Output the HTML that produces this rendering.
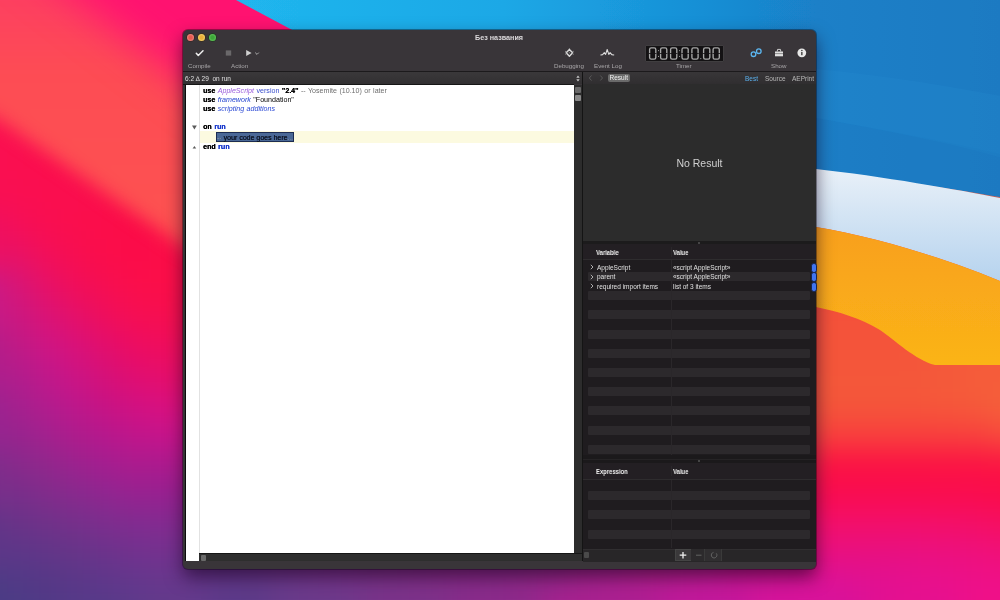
<!DOCTYPE html>
<html><head><meta charset="utf-8">
<style>
*{margin:0;padding:0;box-sizing:border-box}
html,body{width:1000px;height:600px;overflow:hidden;background:#e0206a;font-family:"Liberation Sans",sans-serif}
#bg{position:absolute;left:0;top:0;width:1000px;height:600px}
.abs{position:absolute}
.abs,.lbl,.row,.hdr{will-change:transform}
#win{position:absolute;left:183px;top:30px;width:633px;height:539px;background:#393539;border-radius:5px;overflow:hidden;box-shadow:0 8px 18px rgba(20,0,30,.6),0 0 0 1px rgba(0,0,0,.35)}
.code{font-size:7.1px;line-height:9px;color:#000;white-space:nowrap;word-spacing:0.5px}
.code b{font-weight:bold;text-shadow:0.25px 0 0 currentColor}
.hdr{font-size:7px;font-weight:bold;color:#f0f0f0;white-space:nowrap;transform:scaleX(0.84);transform-origin:0 0}
.row{position:absolute;font-size:6.5px;color:#e0e0e0;white-space:nowrap}
.stripe{left:588px;width:222px;height:9.4px;background:#2c292c;border-radius:1px}
.lbl{position:absolute;font-size:6.2px;color:#a8a6a8;white-space:nowrap}
</style></head><body>
<svg id="bg" viewBox="0 0 1000 600">
<defs>
<linearGradient id="gL" gradientUnits="userSpaceOnUse" x1="180" y1="0" x2="-166" y2="480">
<stop offset="0" stop-color="#ff1270"/>
<stop offset="0.177" stop-color="#fe3a62"/>
<stop offset="0.262" stop-color="#fd4d55"/>
<stop offset="0.32" stop-color="#fc4a55"/>
<stop offset="0.38" stop-color="#fb1e4c"/>
<stop offset="0.414" stop-color="#fd0c48"/>
<stop offset="0.515" stop-color="#e80c70"/>
<stop offset="0.6" stop-color="#cc1288"/>
<stop offset="0.667" stop-color="#b01888"/>
<stop offset="0.828" stop-color="#6a3488"/>
<stop offset="1" stop-color="#4a3c80"/>
</linearGradient>
<linearGradient id="gRight" x1="0" y1="0" x2="0" y2="600" gradientUnits="userSpaceOnUse">
<stop offset="0" stop-color="#f45438"/>
<stop offset="0.6" stop-color="#f45438"/>
<stop offset="0.68" stop-color="#f83a3c"/>
<stop offset="0.77" stop-color="#fb0c44"/>
<stop offset="0.87" stop-color="#f0107a"/>
<stop offset="1" stop-color="#d41892"/>
</linearGradient>
<linearGradient id="gBot" x1="183" y1="0" x2="1000" y2="0" gradientUnits="userSpaceOnUse">
<stop offset="0" stop-color="#4e3a86"/>
<stop offset="0.15" stop-color="#6a3a8a"/>
<stop offset="0.39" stop-color="#8a2a8a"/>
<stop offset="0.57" stop-color="#a02890"/>
<stop offset="0.68" stop-color="#c0189a"/>
<stop offset="0.78" stop-color="#e0108a"/>
<stop offset="1" stop-color="#f01070"/>
</linearGradient>
<linearGradient id="gMaskL" x1="0" y1="0" x2="1000" y2="0" gradientUnits="userSpaceOnUse">
<stop offset="0.45" stop-color="#fff"/>
<stop offset="0.75" stop-color="#000"/>
</linearGradient>
<linearGradient id="gMaskB" x1="0" y1="520" x2="0" y2="600" gradientUnits="userSpaceOnUse">
<stop offset="0.3" stop-color="#000"/>
<stop offset="0.65" stop-color="#fff"/>
</linearGradient>
<linearGradient id="gMaskBx" x1="0" y1="0" x2="1000" y2="0" gradientUnits="userSpaceOnUse">
<stop offset="0.12" stop-color="#000"/>
<stop offset="0.2" stop-color="#fff"/>
<stop offset="0.8" stop-color="#fff"/>
<stop offset="0.84" stop-color="#000"/>
</linearGradient>
<mask id="mBx"><rect width="1000" height="600" fill="url(#gMaskBx)"/></mask>
<mask id="mB"><rect width="1000" height="600" fill="url(#gMaskB)" mask="url(#mBx)"/></mask>
<mask id="mL"><rect width="1000" height="600" fill="url(#gMaskL)"/></mask>
<filter id="b8" x="-20%" y="-20%" width="140%" height="140%"><feGaussianBlur stdDeviation="8"/></filter>
<filter id="bgrid" x="-10%" y="-10%" width="120%" height="120%" color-interpolation-filters="sRGB"><feGaussianBlur stdDeviation="14"/></filter>
<filter id="bsoft" x="-20%" y="-20%" width="140%" height="140%" color-interpolation-filters="sRGB"><feGaussianBlur stdDeviation="9"/></filter>
<filter id="bpink" x="-30%" y="-30%" width="160%" height="160%" color-interpolation-filters="sRGB"><feGaussianBlur stdDeviation="20"/></filter>
<linearGradient id="gCoral" x1="0" y1="0" x2="0" y2="240" gradientUnits="userSpaceOnUse"><stop offset="0" stop-color="#fd4060"/><stop offset="0.3" stop-color="#fd4c54"/><stop offset="1" stop-color="#fd5250"/></linearGradient>
<filter id="b1"><feGaussianBlur stdDeviation="0.7"/></filter>
<linearGradient id="gBlue" x1="236" y1="0" x2="1000" y2="0" gradientUnits="userSpaceOnUse">
<stop offset="0" stop-color="#20b6ee"/>
<stop offset="0.35" stop-color="#1ca8e6"/>
<stop offset="0.6" stop-color="#1890d6"/>
<stop offset="0.76" stop-color="#1a80c8"/>
<stop offset="1" stop-color="#1a7ac2"/>
</linearGradient>
<linearGradient id="gWhite" x1="0" y1="170" x2="0" y2="285" gradientUnits="userSpaceOnUse">
<stop offset="0" stop-color="#e8f0f8"/>
<stop offset="1" stop-color="#b4d2ee"/>
</linearGradient>
<linearGradient id="gOr" x1="0" y1="230" x2="0" y2="365" gradientUnits="userSpaceOnUse">
<stop offset="0" stop-color="#f8a01c"/>
<stop offset="1" stop-color="#fbb418"/>
</linearGradient>
</defs>
<g filter="url(#bgrid)"><rect x="-60" y="-60" width="30.5" height="30.5" fill="#fb1050"/><rect x="-30" y="-60" width="30.5" height="30.5" fill="#fb1050"/><rect x="0" y="-60" width="30.5" height="30.5" fill="#fb1050"/><rect x="30" y="-60" width="30.5" height="30.5" fill="#fb1050"/><rect x="60" y="-60" width="30.5" height="30.5" fill="#fb1050"/><rect x="90" y="-60" width="30.5" height="30.5" fill="#fb1050"/><rect x="120" y="-60" width="30.5" height="30.5" fill="#fb1050"/><rect x="150" y="-60" width="30.5" height="30.5" fill="#fb1050"/><rect x="180" y="-60" width="30.5" height="30.5" fill="#fb1050"/><rect x="210" y="-60" width="30.5" height="30.5" fill="#fb1050"/><rect x="240" y="-60" width="30.5" height="30.5" fill="#fb1050"/><rect x="270" y="-60" width="30.5" height="30.5" fill="#fb1050"/><rect x="300" y="-60" width="30.5" height="30.5" fill="#fb1050"/><rect x="330" y="-60" width="30.5" height="30.5" fill="#fb1050"/><rect x="360" y="-60" width="30.5" height="30.5" fill="#fb1050"/><rect x="390" y="-60" width="30.5" height="30.5" fill="#fb1050"/><rect x="420" y="-60" width="30.5" height="30.5" fill="#fb1050"/><rect x="450" y="-60" width="30.5" height="30.5" fill="#fb1050"/><rect x="480" y="-60" width="30.5" height="30.5" fill="#fb1050"/><rect x="510" y="-60" width="30.5" height="30.5" fill="#fb1050"/><rect x="540" y="-60" width="30.5" height="30.5" fill="#fb1050"/><rect x="570" y="-60" width="30.5" height="30.5" fill="#fb1050"/><rect x="600" y="-60" width="30.5" height="30.5" fill="#fb1050"/><rect x="630" y="-60" width="30.5" height="30.5" fill="#fb1050"/><rect x="660" y="-60" width="30.5" height="30.5" fill="#f4503a"/><rect x="690" y="-60" width="30.5" height="30.5" fill="#f4503a"/><rect x="720" y="-60" width="30.5" height="30.5" fill="#f4503a"/><rect x="750" y="-60" width="30.5" height="30.5" fill="#f4503a"/><rect x="780" y="-60" width="30.5" height="30.5" fill="#f4503a"/><rect x="810" y="-60" width="30.5" height="30.5" fill="#f4503a"/><rect x="840" y="-60" width="30.5" height="30.5" fill="#f4503a"/><rect x="870" y="-60" width="30.5" height="30.5" fill="#f4503a"/><rect x="900" y="-60" width="30.5" height="30.5" fill="#f4503a"/><rect x="930" y="-60" width="30.5" height="30.5" fill="#f4503a"/><rect x="960" y="-60" width="30.5" height="30.5" fill="#f45a3a"/><rect x="990" y="-60" width="30.5" height="30.5" fill="#f45a3a"/><rect x="1020" y="-60" width="30.5" height="30.5" fill="#f45a3a"/><rect x="1050" y="-60" width="30.5" height="30.5" fill="#f45a3a"/><rect x="-60" y="-30" width="30.5" height="30.5" fill="#fb1050"/><rect x="-30" y="-30" width="30.5" height="30.5" fill="#fb1050"/><rect x="0" y="-30" width="30.5" height="30.5" fill="#fb1050"/><rect x="30" y="-30" width="30.5" height="30.5" fill="#fb1050"/><rect x="60" y="-30" width="30.5" height="30.5" fill="#fb1050"/><rect x="90" y="-30" width="30.5" height="30.5" fill="#fb1050"/><rect x="120" y="-30" width="30.5" height="30.5" fill="#fb1050"/><rect x="150" y="-30" width="30.5" height="30.5" fill="#fb1050"/><rect x="180" y="-30" width="30.5" height="30.5" fill="#fb1050"/><rect x="210" y="-30" width="30.5" height="30.5" fill="#fb1050"/><rect x="240" y="-30" width="30.5" height="30.5" fill="#fb1050"/><rect x="270" y="-30" width="30.5" height="30.5" fill="#fb1050"/><rect x="300" y="-30" width="30.5" height="30.5" fill="#fb1050"/><rect x="330" y="-30" width="30.5" height="30.5" fill="#fb1050"/><rect x="360" y="-30" width="30.5" height="30.5" fill="#fb1050"/><rect x="390" y="-30" width="30.5" height="30.5" fill="#fb1050"/><rect x="420" y="-30" width="30.5" height="30.5" fill="#fb1050"/><rect x="450" y="-30" width="30.5" height="30.5" fill="#fb1050"/><rect x="480" y="-30" width="30.5" height="30.5" fill="#fb1050"/><rect x="510" y="-30" width="30.5" height="30.5" fill="#fb1050"/><rect x="540" y="-30" width="30.5" height="30.5" fill="#fb1050"/><rect x="570" y="-30" width="30.5" height="30.5" fill="#fb1050"/><rect x="600" y="-30" width="30.5" height="30.5" fill="#fb1050"/><rect x="630" y="-30" width="30.5" height="30.5" fill="#fb1050"/><rect x="660" y="-30" width="30.5" height="30.5" fill="#f4503a"/><rect x="690" y="-30" width="30.5" height="30.5" fill="#f4503a"/><rect x="720" y="-30" width="30.5" height="30.5" fill="#f4503a"/><rect x="750" y="-30" width="30.5" height="30.5" fill="#f4503a"/><rect x="780" y="-30" width="30.5" height="30.5" fill="#f4503a"/><rect x="810" y="-30" width="30.5" height="30.5" fill="#f4503a"/><rect x="840" y="-30" width="30.5" height="30.5" fill="#f4503a"/><rect x="870" y="-30" width="30.5" height="30.5" fill="#f4503a"/><rect x="900" y="-30" width="30.5" height="30.5" fill="#f4503a"/><rect x="930" y="-30" width="30.5" height="30.5" fill="#f4503a"/><rect x="960" y="-30" width="30.5" height="30.5" fill="#f45a3a"/><rect x="990" y="-30" width="30.5" height="30.5" fill="#f45a3a"/><rect x="1020" y="-30" width="30.5" height="30.5" fill="#f45a3a"/><rect x="1050" y="-30" width="30.5" height="30.5" fill="#f45a3a"/><rect x="-60" y="0" width="30.5" height="30.5" fill="#fb1050"/><rect x="-30" y="0" width="30.5" height="30.5" fill="#fb1050"/><rect x="0" y="0" width="30.5" height="30.5" fill="#fb1050"/><rect x="30" y="0" width="30.5" height="30.5" fill="#fb1050"/><rect x="60" y="0" width="30.5" height="30.5" fill="#fb1050"/><rect x="90" y="0" width="30.5" height="30.5" fill="#fb1050"/><rect x="120" y="0" width="30.5" height="30.5" fill="#fb1050"/><rect x="150" y="0" width="30.5" height="30.5" fill="#fb1050"/><rect x="180" y="0" width="30.5" height="30.5" fill="#fb1050"/><rect x="210" y="0" width="30.5" height="30.5" fill="#fb1050"/><rect x="240" y="0" width="30.5" height="30.5" fill="#fb1050"/><rect x="270" y="0" width="30.5" height="30.5" fill="#fb1050"/><rect x="300" y="0" width="30.5" height="30.5" fill="#fb1050"/><rect x="330" y="0" width="30.5" height="30.5" fill="#fb1050"/><rect x="360" y="0" width="30.5" height="30.5" fill="#fb1050"/><rect x="390" y="0" width="30.5" height="30.5" fill="#fb1050"/><rect x="420" y="0" width="30.5" height="30.5" fill="#fb1050"/><rect x="450" y="0" width="30.5" height="30.5" fill="#fb1050"/><rect x="480" y="0" width="30.5" height="30.5" fill="#fb1050"/><rect x="510" y="0" width="30.5" height="30.5" fill="#fb1050"/><rect x="540" y="0" width="30.5" height="30.5" fill="#fb1050"/><rect x="570" y="0" width="30.5" height="30.5" fill="#fb1050"/><rect x="600" y="0" width="30.5" height="30.5" fill="#fb1050"/><rect x="630" y="0" width="30.5" height="30.5" fill="#f4503a"/><rect x="660" y="0" width="30.5" height="30.5" fill="#f4503a"/><rect x="690" y="0" width="30.5" height="30.5" fill="#f4503a"/><rect x="720" y="0" width="30.5" height="30.5" fill="#f4503a"/><rect x="750" y="0" width="30.5" height="30.5" fill="#f4503a"/><rect x="780" y="0" width="30.5" height="30.5" fill="#f4503a"/><rect x="810" y="0" width="30.5" height="30.5" fill="#f4503a"/><rect x="840" y="0" width="30.5" height="30.5" fill="#f4503a"/><rect x="870" y="0" width="30.5" height="30.5" fill="#f4503a"/><rect x="900" y="0" width="30.5" height="30.5" fill="#f4503a"/><rect x="930" y="0" width="30.5" height="30.5" fill="#f4503a"/><rect x="960" y="0" width="30.5" height="30.5" fill="#f45a3a"/><rect x="990" y="0" width="30.5" height="30.5" fill="#f45a3a"/><rect x="1020" y="0" width="30.5" height="30.5" fill="#f45a3a"/><rect x="1050" y="0" width="30.5" height="30.5" fill="#f45a3a"/><rect x="-60" y="30" width="30.5" height="30.5" fill="#fb1050"/><rect x="-30" y="30" width="30.5" height="30.5" fill="#fb1050"/><rect x="0" y="30" width="30.5" height="30.5" fill="#fb1050"/><rect x="30" y="30" width="30.5" height="30.5" fill="#fb1050"/><rect x="60" y="30" width="30.5" height="30.5" fill="#fb1050"/><rect x="90" y="30" width="30.5" height="30.5" fill="#fb1050"/><rect x="120" y="30" width="30.5" height="30.5" fill="#fb1050"/><rect x="150" y="30" width="30.5" height="30.5" fill="#fb1050"/><rect x="180" y="30" width="30.5" height="30.5" fill="#fb1050"/><rect x="210" y="30" width="30.5" height="30.5" fill="#fb1050"/><rect x="240" y="30" width="30.5" height="30.5" fill="#fb1050"/><rect x="270" y="30" width="30.5" height="30.5" fill="#fb1050"/><rect x="300" y="30" width="30.5" height="30.5" fill="#fa134f"/><rect x="330" y="30" width="30.5" height="30.5" fill="#fa194d"/><rect x="360" y="30" width="30.5" height="30.5" fill="#fb1050"/><rect x="390" y="30" width="30.5" height="30.5" fill="#fb1050"/><rect x="420" y="30" width="30.5" height="30.5" fill="#fb1050"/><rect x="450" y="30" width="30.5" height="30.5" fill="#fb1050"/><rect x="480" y="30" width="30.5" height="30.5" fill="#fb1050"/><rect x="510" y="30" width="30.5" height="30.5" fill="#fb1050"/><rect x="540" y="30" width="30.5" height="30.5" fill="#fb1050"/><rect x="570" y="30" width="30.5" height="30.5" fill="#fb1050"/><rect x="600" y="30" width="30.5" height="30.5" fill="#f4503a"/><rect x="630" y="30" width="30.5" height="30.5" fill="#f4503a"/><rect x="660" y="30" width="30.5" height="30.5" fill="#f4503a"/><rect x="690" y="30" width="30.5" height="30.5" fill="#f4503a"/><rect x="720" y="30" width="30.5" height="30.5" fill="#f4503a"/><rect x="750" y="30" width="30.5" height="30.5" fill="#f4503a"/><rect x="780" y="30" width="30.5" height="30.5" fill="#f4503a"/><rect x="810" y="30" width="30.5" height="30.5" fill="#f4503a"/><rect x="840" y="30" width="30.5" height="30.5" fill="#f4503a"/><rect x="870" y="30" width="30.5" height="30.5" fill="#f4503a"/><rect x="900" y="30" width="30.5" height="30.5" fill="#f4503a"/><rect x="930" y="30" width="30.5" height="30.5" fill="#f4503a"/><rect x="960" y="30" width="30.5" height="30.5" fill="#f45a3a"/><rect x="990" y="30" width="30.5" height="30.5" fill="#f45a3a"/><rect x="1020" y="30" width="30.5" height="30.5" fill="#f45a3a"/><rect x="1050" y="30" width="30.5" height="30.5" fill="#f45a3a"/><rect x="-60" y="60" width="30.5" height="30.5" fill="#fb1050"/><rect x="-30" y="60" width="30.5" height="30.5" fill="#fb1050"/><rect x="0" y="60" width="30.5" height="30.5" fill="#fb1050"/><rect x="30" y="60" width="30.5" height="30.5" fill="#fb1050"/><rect x="60" y="60" width="30.5" height="30.5" fill="#fb1050"/><rect x="90" y="60" width="30.5" height="30.5" fill="#fb1050"/><rect x="120" y="60" width="30.5" height="30.5" fill="#fb1050"/><rect x="150" y="60" width="30.5" height="30.5" fill="#fb1050"/><rect x="180" y="60" width="30.5" height="30.5" fill="#fb1050"/><rect x="210" y="60" width="30.5" height="30.5" fill="#fb1050"/><rect x="240" y="60" width="30.5" height="30.5" fill="#fb0f4e"/><rect x="270" y="60" width="30.5" height="30.5" fill="#f81151"/><rect x="300" y="60" width="30.5" height="30.5" fill="#f31354"/><rect x="330" y="60" width="30.5" height="30.5" fill="#f61750"/><rect x="360" y="60" width="30.5" height="30.5" fill="#fa1a4d"/><rect x="390" y="60" width="30.5" height="30.5" fill="#fa1c4c"/><rect x="420" y="60" width="30.5" height="30.5" fill="#fb1050"/><rect x="450" y="60" width="30.5" height="30.5" fill="#fb1050"/><rect x="480" y="60" width="30.5" height="30.5" fill="#fb1050"/><rect x="510" y="60" width="30.5" height="30.5" fill="#fb1050"/><rect x="540" y="60" width="30.5" height="30.5" fill="#fb1050"/><rect x="570" y="60" width="30.5" height="30.5" fill="#fb1050"/><rect x="600" y="60" width="30.5" height="30.5" fill="#f4503a"/><rect x="630" y="60" width="30.5" height="30.5" fill="#f4503a"/><rect x="660" y="60" width="30.5" height="30.5" fill="#f4503a"/><rect x="690" y="60" width="30.5" height="30.5" fill="#f4503a"/><rect x="720" y="60" width="30.5" height="30.5" fill="#f4503a"/><rect x="750" y="60" width="30.5" height="30.5" fill="#f4503a"/><rect x="780" y="60" width="30.5" height="30.5" fill="#f4503a"/><rect x="810" y="60" width="30.5" height="30.5" fill="#f4503a"/><rect x="840" y="60" width="30.5" height="30.5" fill="#f4503a"/><rect x="870" y="60" width="30.5" height="30.5" fill="#f4503a"/><rect x="900" y="60" width="30.5" height="30.5" fill="#f4503a"/><rect x="930" y="60" width="30.5" height="30.5" fill="#f4503a"/><rect x="960" y="60" width="30.5" height="30.5" fill="#f45a3a"/><rect x="990" y="60" width="30.5" height="30.5" fill="#f45a3a"/><rect x="1020" y="60" width="30.5" height="30.5" fill="#f45a3a"/><rect x="1050" y="60" width="30.5" height="30.5" fill="#f45a3a"/><rect x="-60" y="90" width="30.5" height="30.5" fill="#fb1050"/><rect x="-30" y="90" width="30.5" height="30.5" fill="#fb1050"/><rect x="0" y="90" width="30.5" height="30.5" fill="#fb1050"/><rect x="30" y="90" width="30.5" height="30.5" fill="#fb1050"/><rect x="60" y="90" width="30.5" height="30.5" fill="#fb1050"/><rect x="90" y="90" width="30.5" height="30.5" fill="#fb1050"/><rect x="120" y="90" width="30.5" height="30.5" fill="#fb1050"/><rect x="150" y="90" width="30.5" height="30.5" fill="#fb1050"/><rect x="180" y="90" width="30.5" height="30.5" fill="#fb1050"/><rect x="210" y="90" width="30.5" height="30.5" fill="#fb0f4e"/><rect x="240" y="90" width="30.5" height="30.5" fill="#fb0f4d"/><rect x="270" y="90" width="30.5" height="30.5" fill="#f41152"/><rect x="300" y="90" width="30.5" height="30.5" fill="#ed1357"/><rect x="330" y="90" width="30.5" height="30.5" fill="#ef1755"/><rect x="360" y="90" width="30.5" height="30.5" fill="#f21a51"/><rect x="390" y="90" width="30.5" height="30.5" fill="#f61e4e"/><rect x="420" y="90" width="30.5" height="30.5" fill="#f9224a"/><rect x="450" y="90" width="30.5" height="30.5" fill="#f9224a"/><rect x="480" y="90" width="30.5" height="30.5" fill="#f92749"/><rect x="510" y="90" width="30.5" height="30.5" fill="#fb1050"/><rect x="540" y="90" width="30.5" height="30.5" fill="#fb1050"/><rect x="570" y="90" width="30.5" height="30.5" fill="#f4503a"/><rect x="600" y="90" width="30.5" height="30.5" fill="#f4503a"/><rect x="630" y="90" width="30.5" height="30.5" fill="#f4503a"/><rect x="660" y="90" width="30.5" height="30.5" fill="#f4503a"/><rect x="690" y="90" width="30.5" height="30.5" fill="#f4503a"/><rect x="720" y="90" width="30.5" height="30.5" fill="#f4503a"/><rect x="750" y="90" width="30.5" height="30.5" fill="#f4503a"/><rect x="780" y="90" width="30.5" height="30.5" fill="#f4503a"/><rect x="810" y="90" width="30.5" height="30.5" fill="#f4503a"/><rect x="840" y="90" width="30.5" height="30.5" fill="#f4503a"/><rect x="870" y="90" width="30.5" height="30.5" fill="#f4503a"/><rect x="900" y="90" width="30.5" height="30.5" fill="#f4503a"/><rect x="930" y="90" width="30.5" height="30.5" fill="#f4503a"/><rect x="960" y="90" width="30.5" height="30.5" fill="#f45a3a"/><rect x="990" y="90" width="30.5" height="30.5" fill="#f45a3a"/><rect x="1020" y="90" width="30.5" height="30.5" fill="#f45a3a"/><rect x="1050" y="90" width="30.5" height="30.5" fill="#f45a3a"/><rect x="-60" y="120" width="30.5" height="30.5" fill="#fb1050"/><rect x="-30" y="120" width="30.5" height="30.5" fill="#fb1050"/><rect x="0" y="120" width="30.5" height="30.5" fill="#fb1050"/><rect x="30" y="120" width="30.5" height="30.5" fill="#fb1050"/><rect x="60" y="120" width="30.5" height="30.5" fill="#fb1050"/><rect x="90" y="120" width="30.5" height="30.5" fill="#fb104e"/><rect x="120" y="120" width="30.5" height="30.5" fill="#fb104e"/><rect x="150" y="120" width="30.5" height="30.5" fill="#fb104e"/><rect x="180" y="120" width="30.5" height="30.5" fill="#fb0f4d"/><rect x="210" y="120" width="30.5" height="30.5" fill="#fb0e4c"/><rect x="240" y="120" width="30.5" height="30.5" fill="#f9104e"/><rect x="270" y="120" width="30.5" height="30.5" fill="#f11253"/><rect x="300" y="120" width="30.5" height="30.5" fill="#e91458"/><rect x="330" y="120" width="30.5" height="30.5" fill="#e71759"/><rect x="360" y="120" width="30.5" height="30.5" fill="#eb1a56"/><rect x="390" y="120" width="30.5" height="30.5" fill="#ee1e52"/><rect x="420" y="120" width="30.5" height="30.5" fill="#f2224f"/><rect x="450" y="120" width="30.5" height="30.5" fill="#f5254b"/><rect x="480" y="120" width="30.5" height="30.5" fill="#f82947"/><rect x="510" y="120" width="30.5" height="30.5" fill="#f82947"/><rect x="540" y="120" width="30.5" height="30.5" fill="#f82c47"/><rect x="570" y="120" width="30.5" height="30.5" fill="#f4503a"/><rect x="600" y="120" width="30.5" height="30.5" fill="#f4503a"/><rect x="630" y="120" width="30.5" height="30.5" fill="#f4503a"/><rect x="660" y="120" width="30.5" height="30.5" fill="#f4503a"/><rect x="690" y="120" width="30.5" height="30.5" fill="#f4503a"/><rect x="720" y="120" width="30.5" height="30.5" fill="#f4503a"/><rect x="750" y="120" width="30.5" height="30.5" fill="#f4503a"/><rect x="780" y="120" width="30.5" height="30.5" fill="#f4503a"/><rect x="810" y="120" width="30.5" height="30.5" fill="#f4503a"/><rect x="840" y="120" width="30.5" height="30.5" fill="#f4503a"/><rect x="870" y="120" width="30.5" height="30.5" fill="#f4503a"/><rect x="900" y="120" width="30.5" height="30.5" fill="#f4503a"/><rect x="930" y="120" width="30.5" height="30.5" fill="#f4503a"/><rect x="960" y="120" width="30.5" height="30.5" fill="#f45a3a"/><rect x="990" y="120" width="30.5" height="30.5" fill="#f45a3a"/><rect x="1020" y="120" width="30.5" height="30.5" fill="#f45a3a"/><rect x="1050" y="120" width="30.5" height="30.5" fill="#f45a3a"/><rect x="-60" y="150" width="30.5" height="30.5" fill="#f91052"/><rect x="-30" y="150" width="30.5" height="30.5" fill="#f91052"/><rect x="0" y="150" width="30.5" height="30.5" fill="#fa0f50"/><rect x="30" y="150" width="30.5" height="30.5" fill="#fb0e4e"/><rect x="60" y="150" width="30.5" height="30.5" fill="#fb0e4e"/><rect x="90" y="150" width="30.5" height="30.5" fill="#fb0e4c"/><rect x="120" y="150" width="30.5" height="30.5" fill="#fb0e4c"/><rect x="150" y="150" width="30.5" height="30.5" fill="#fb0e4c"/><rect x="180" y="150" width="30.5" height="30.5" fill="#fb0e4b"/><rect x="210" y="150" width="30.5" height="30.5" fill="#fb0e4b"/><rect x="240" y="150" width="30.5" height="30.5" fill="#f6114f"/><rect x="270" y="150" width="30.5" height="30.5" fill="#ee1355"/><rect x="300" y="150" width="30.5" height="30.5" fill="#e6155a"/><rect x="330" y="150" width="30.5" height="30.5" fill="#e0175e"/><rect x="360" y="150" width="30.5" height="30.5" fill="#e31a5a"/><rect x="390" y="150" width="30.5" height="30.5" fill="#e71e57"/><rect x="420" y="150" width="30.5" height="30.5" fill="#ea2253"/><rect x="450" y="150" width="30.5" height="30.5" fill="#ee254f"/><rect x="480" y="150" width="30.5" height="30.5" fill="#f1294c"/><rect x="510" y="150" width="30.5" height="30.5" fill="#f42d48"/><rect x="540" y="150" width="30.5" height="30.5" fill="#f83045"/><rect x="570" y="150" width="30.5" height="30.5" fill="#f83045"/><rect x="600" y="150" width="30.5" height="30.5" fill="#f83245"/><rect x="630" y="150" width="30.5" height="30.5" fill="#f83545"/><rect x="660" y="150" width="30.5" height="30.5" fill="#f4503a"/><rect x="690" y="150" width="30.5" height="30.5" fill="#f4503a"/><rect x="720" y="150" width="30.5" height="30.5" fill="#f4503a"/><rect x="750" y="150" width="30.5" height="30.5" fill="#f4503a"/><rect x="780" y="150" width="30.5" height="30.5" fill="#f4503a"/><rect x="810" y="150" width="30.5" height="30.5" fill="#f4503a"/><rect x="840" y="150" width="30.5" height="30.5" fill="#f4503a"/><rect x="870" y="150" width="30.5" height="30.5" fill="#f4503a"/><rect x="900" y="150" width="30.5" height="30.5" fill="#f4503a"/><rect x="930" y="150" width="30.5" height="30.5" fill="#f4503a"/><rect x="960" y="150" width="30.5" height="30.5" fill="#f45a3a"/><rect x="990" y="150" width="30.5" height="30.5" fill="#f45a3a"/><rect x="1020" y="150" width="30.5" height="30.5" fill="#f45a3a"/><rect x="1050" y="150" width="30.5" height="30.5" fill="#f45a3a"/><rect x="-60" y="180" width="30.5" height="30.5" fill="#f91052"/><rect x="-30" y="180" width="30.5" height="30.5" fill="#f91052"/><rect x="0" y="180" width="30.5" height="30.5" fill="#f90f52"/><rect x="30" y="180" width="30.5" height="30.5" fill="#fa0e4f"/><rect x="60" y="180" width="30.5" height="30.5" fill="#fa0e4e"/><rect x="90" y="180" width="30.5" height="30.5" fill="#fb0e4b"/><rect x="120" y="180" width="30.5" height="30.5" fill="#fb0e4a"/><rect x="150" y="180" width="30.5" height="30.5" fill="#fb0e4a"/><rect x="180" y="180" width="30.5" height="30.5" fill="#fb0d4a"/><rect x="210" y="180" width="30.5" height="30.5" fill="#fa104b"/><rect x="240" y="180" width="30.5" height="30.5" fill="#f31151"/><rect x="270" y="180" width="30.5" height="30.5" fill="#eb1356"/><rect x="300" y="180" width="30.5" height="30.5" fill="#e3155b"/><rect x="330" y="180" width="30.5" height="30.5" fill="#db1760"/><rect x="360" y="180" width="30.5" height="30.5" fill="#dc1a5f"/><rect x="390" y="180" width="30.5" height="30.5" fill="#df1e5b"/><rect x="420" y="180" width="30.5" height="30.5" fill="#e32257"/><rect x="450" y="180" width="30.5" height="30.5" fill="#e62554"/><rect x="480" y="180" width="30.5" height="30.5" fill="#ea2950"/><rect x="510" y="180" width="30.5" height="30.5" fill="#ed2d4d"/><rect x="540" y="180" width="30.5" height="30.5" fill="#f03049"/><rect x="570" y="180" width="30.5" height="30.5" fill="#f43446"/><rect x="600" y="180" width="30.5" height="30.5" fill="#f73743"/><rect x="630" y="180" width="30.5" height="30.5" fill="#f73743"/><rect x="660" y="180" width="30.5" height="30.5" fill="#f73843"/><rect x="690" y="180" width="30.5" height="30.5" fill="#f73b43"/><rect x="720" y="180" width="30.5" height="30.5" fill="#f4503a"/><rect x="750" y="180" width="30.5" height="30.5" fill="#f4503a"/><rect x="780" y="180" width="30.5" height="30.5" fill="#f4503a"/><rect x="810" y="180" width="30.5" height="30.5" fill="#f4503a"/><rect x="840" y="180" width="30.5" height="30.5" fill="#f4503a"/><rect x="870" y="180" width="30.5" height="30.5" fill="#f4503a"/><rect x="900" y="180" width="30.5" height="30.5" fill="#f4503a"/><rect x="930" y="180" width="30.5" height="30.5" fill="#f4503a"/><rect x="960" y="180" width="30.5" height="30.5" fill="#f45a3a"/><rect x="990" y="180" width="30.5" height="30.5" fill="#f45a3a"/><rect x="1020" y="180" width="30.5" height="30.5" fill="#f45a3a"/><rect x="1050" y="180" width="30.5" height="30.5" fill="#f45a3a"/><rect x="-60" y="210" width="30.5" height="30.5" fill="#ee1062"/><rect x="-30" y="210" width="30.5" height="30.5" fill="#ee1062"/><rect x="0" y="210" width="30.5" height="30.5" fill="#f40f59"/><rect x="30" y="210" width="30.5" height="30.5" fill="#f90e51"/><rect x="60" y="210" width="30.5" height="30.5" fill="#fa0e4d"/><rect x="90" y="210" width="30.5" height="30.5" fill="#fb0d4a"/><rect x="120" y="210" width="30.5" height="30.5" fill="#fb0c48"/><rect x="150" y="210" width="30.5" height="30.5" fill="#fb0c48"/><rect x="180" y="210" width="30.5" height="30.5" fill="#fb0d49"/><rect x="210" y="210" width="30.5" height="30.5" fill="#f7104d"/><rect x="240" y="210" width="30.5" height="30.5" fill="#ef1252"/><rect x="270" y="210" width="30.5" height="30.5" fill="#e81457"/><rect x="300" y="210" width="30.5" height="30.5" fill="#e0165c"/><rect x="330" y="210" width="30.5" height="30.5" fill="#d81861"/><rect x="360" y="210" width="30.5" height="30.5" fill="#d51a63"/><rect x="390" y="210" width="30.5" height="30.5" fill="#d81e5f"/><rect x="420" y="210" width="30.5" height="30.5" fill="#db225c"/><rect x="450" y="210" width="30.5" height="30.5" fill="#df2558"/><rect x="480" y="210" width="30.5" height="30.5" fill="#e22955"/><rect x="510" y="210" width="30.5" height="30.5" fill="#e62d51"/><rect x="540" y="210" width="30.5" height="30.5" fill="#e9304e"/><rect x="570" y="210" width="30.5" height="30.5" fill="#ec344a"/><rect x="600" y="210" width="30.5" height="30.5" fill="#f03847"/><rect x="630" y="210" width="30.5" height="30.5" fill="#f33b43"/><rect x="660" y="210" width="30.5" height="30.5" fill="#f63e40"/><rect x="690" y="210" width="30.5" height="30.5" fill="#f63e40"/><rect x="720" y="210" width="30.5" height="30.5" fill="#f63e40"/><rect x="750" y="210" width="30.5" height="30.5" fill="#f64140"/><rect x="780" y="210" width="30.5" height="30.5" fill="#f64540"/><rect x="810" y="210" width="30.5" height="30.5" fill="#f4503a"/><rect x="840" y="210" width="30.5" height="30.5" fill="#f4503a"/><rect x="870" y="210" width="30.5" height="30.5" fill="#f4503a"/><rect x="900" y="210" width="30.5" height="30.5" fill="#f4503a"/><rect x="930" y="210" width="30.5" height="30.5" fill="#f4503a"/><rect x="960" y="210" width="30.5" height="30.5" fill="#f45a3a"/><rect x="990" y="210" width="30.5" height="30.5" fill="#f45a3a"/><rect x="1020" y="210" width="30.5" height="30.5" fill="#f45a3a"/><rect x="1050" y="210" width="30.5" height="30.5" fill="#f45a3a"/><rect x="-60" y="240" width="30.5" height="30.5" fill="#ee1062"/><rect x="-30" y="240" width="30.5" height="30.5" fill="#ee1062"/><rect x="0" y="240" width="30.5" height="30.5" fill="#e81266"/><rect x="30" y="240" width="30.5" height="30.5" fill="#f20f5a"/><rect x="60" y="240" width="30.5" height="30.5" fill="#f70e51"/><rect x="90" y="240" width="30.5" height="30.5" fill="#fb0d4a"/><rect x="120" y="240" width="30.5" height="30.5" fill="#fb0c49"/><rect x="150" y="240" width="30.5" height="30.5" fill="#fb0d48"/><rect x="180" y="240" width="30.5" height="30.5" fill="#fb0f49"/><rect x="210" y="240" width="30.5" height="30.5" fill="#f4114e"/><rect x="240" y="240" width="30.5" height="30.5" fill="#ec1353"/><rect x="270" y="240" width="30.5" height="30.5" fill="#e51558"/><rect x="300" y="240" width="30.5" height="30.5" fill="#dd175d"/><rect x="330" y="240" width="30.5" height="30.5" fill="#d51962"/><rect x="360" y="240" width="30.5" height="30.5" fill="#cd1b67"/><rect x="390" y="240" width="30.5" height="30.5" fill="#d11e64"/><rect x="420" y="240" width="30.5" height="30.5" fill="#d42260"/><rect x="450" y="240" width="30.5" height="30.5" fill="#d7255d"/><rect x="480" y="240" width="30.5" height="30.5" fill="#db2959"/><rect x="510" y="240" width="30.5" height="30.5" fill="#de2d56"/><rect x="540" y="240" width="30.5" height="30.5" fill="#e23052"/><rect x="570" y="240" width="30.5" height="30.5" fill="#e5344f"/><rect x="600" y="240" width="30.5" height="30.5" fill="#e8384b"/><rect x="630" y="240" width="30.5" height="30.5" fill="#ec3b48"/><rect x="660" y="240" width="30.5" height="30.5" fill="#ef3f44"/><rect x="690" y="240" width="30.5" height="30.5" fill="#f34340"/><rect x="720" y="240" width="30.5" height="30.5" fill="#f5453e"/><rect x="750" y="240" width="30.5" height="30.5" fill="#f5453e"/><rect x="780" y="240" width="30.5" height="30.5" fill="#f5453e"/><rect x="810" y="240" width="30.5" height="30.5" fill="#f5483e"/><rect x="840" y="240" width="30.5" height="30.5" fill="#f54b3e"/><rect x="870" y="240" width="30.5" height="30.5" fill="#f54f3d"/><rect x="900" y="240" width="30.5" height="30.5" fill="#f4503a"/><rect x="930" y="240" width="30.5" height="30.5" fill="#f4503a"/><rect x="960" y="240" width="30.5" height="30.5" fill="#f45a3a"/><rect x="990" y="240" width="30.5" height="30.5" fill="#f45a3a"/><rect x="1020" y="240" width="30.5" height="30.5" fill="#f45a3a"/><rect x="1050" y="240" width="30.5" height="30.5" fill="#f45a3a"/><rect x="-60" y="270" width="30.5" height="30.5" fill="#c81a88"/><rect x="-30" y="270" width="30.5" height="30.5" fill="#c81a88"/><rect x="0" y="270" width="30.5" height="30.5" fill="#d61678"/><rect x="30" y="270" width="30.5" height="30.5" fill="#e61168"/><rect x="60" y="270" width="30.5" height="30.5" fill="#f10e5a"/><rect x="90" y="270" width="30.5" height="30.5" fill="#f60e51"/><rect x="120" y="270" width="30.5" height="30.5" fill="#fb0e4b"/><rect x="150" y="270" width="30.5" height="30.5" fill="#fb0e48"/><rect x="180" y="270" width="30.5" height="30.5" fill="#f9104a"/><rect x="210" y="270" width="30.5" height="30.5" fill="#f1124f"/><rect x="240" y="270" width="30.5" height="30.5" fill="#e91354"/><rect x="270" y="270" width="30.5" height="30.5" fill="#e11559"/><rect x="300" y="270" width="30.5" height="30.5" fill="#da175e"/><rect x="330" y="270" width="30.5" height="30.5" fill="#d21964"/><rect x="360" y="270" width="30.5" height="30.5" fill="#ca1b69"/><rect x="390" y="270" width="30.5" height="30.5" fill="#c91e68"/><rect x="420" y="270" width="30.5" height="30.5" fill="#cd2265"/><rect x="450" y="270" width="30.5" height="30.5" fill="#d02561"/><rect x="480" y="270" width="30.5" height="30.5" fill="#d3295e"/><rect x="510" y="270" width="30.5" height="30.5" fill="#d72d5a"/><rect x="540" y="270" width="30.5" height="30.5" fill="#da3057"/><rect x="570" y="270" width="30.5" height="30.5" fill="#de3453"/><rect x="600" y="270" width="30.5" height="30.5" fill="#e13850"/><rect x="630" y="270" width="30.5" height="30.5" fill="#e43b4c"/><rect x="660" y="270" width="30.5" height="30.5" fill="#e83f48"/><rect x="690" y="270" width="30.5" height="30.5" fill="#eb4345"/><rect x="720" y="270" width="30.5" height="30.5" fill="#ef4641"/><rect x="750" y="270" width="30.5" height="30.5" fill="#f24a3e"/><rect x="780" y="270" width="30.5" height="30.5" fill="#f44c3b"/><rect x="810" y="270" width="30.5" height="30.5" fill="#f44c3b"/><rect x="840" y="270" width="30.5" height="30.5" fill="#f44c3b"/><rect x="870" y="270" width="30.5" height="30.5" fill="#f44e3b"/><rect x="900" y="270" width="30.5" height="30.5" fill="#f4513b"/><rect x="930" y="270" width="30.5" height="30.5" fill="#f4543b"/><rect x="960" y="270" width="30.5" height="30.5" fill="#f45a3a"/><rect x="990" y="270" width="30.5" height="30.5" fill="#f45a3a"/><rect x="1020" y="270" width="30.5" height="30.5" fill="#f45a3a"/><rect x="1050" y="270" width="30.5" height="30.5" fill="#f45a3a"/><rect x="-60" y="300" width="30.5" height="30.5" fill="#c81a88"/><rect x="-30" y="300" width="30.5" height="30.5" fill="#c81a88"/><rect x="0" y="300" width="30.5" height="30.5" fill="#ca1881"/><rect x="30" y="300" width="30.5" height="30.5" fill="#da1376"/><rect x="60" y="300" width="30.5" height="30.5" fill="#e51069"/><rect x="90" y="300" width="30.5" height="30.5" fill="#ef0e5c"/><rect x="120" y="300" width="30.5" height="30.5" fill="#f60e53"/><rect x="150" y="300" width="30.5" height="30.5" fill="#f60e50"/><rect x="180" y="300" width="30.5" height="30.5" fill="#f5114b"/><rect x="210" y="300" width="30.5" height="30.5" fill="#ee1250"/><rect x="240" y="300" width="30.5" height="30.5" fill="#e61455"/><rect x="270" y="300" width="30.5" height="30.5" fill="#de165b"/><rect x="300" y="300" width="30.5" height="30.5" fill="#d61860"/><rect x="330" y="300" width="30.5" height="30.5" fill="#cf1a65"/><rect x="360" y="300" width="30.5" height="30.5" fill="#c71c6a"/><rect x="390" y="300" width="30.5" height="30.5" fill="#c21e6d"/><rect x="420" y="300" width="30.5" height="30.5" fill="#c52269"/><rect x="450" y="300" width="30.5" height="30.5" fill="#c92566"/><rect x="480" y="300" width="30.5" height="30.5" fill="#cc2962"/><rect x="510" y="300" width="30.5" height="30.5" fill="#cf2d5f"/><rect x="540" y="300" width="30.5" height="30.5" fill="#d3305b"/><rect x="570" y="300" width="30.5" height="30.5" fill="#d63458"/><rect x="600" y="300" width="30.5" height="30.5" fill="#da3854"/><rect x="630" y="300" width="30.5" height="30.5" fill="#dd3b51"/><rect x="660" y="300" width="30.5" height="30.5" fill="#e03f4d"/><rect x="690" y="300" width="30.5" height="30.5" fill="#e44349"/><rect x="720" y="300" width="30.5" height="30.5" fill="#e74646"/><rect x="750" y="300" width="30.5" height="30.5" fill="#eb4a42"/><rect x="780" y="300" width="30.5" height="30.5" fill="#ee4d3f"/><rect x="810" y="300" width="30.5" height="30.5" fill="#f4513a"/><rect x="840" y="300" width="30.5" height="30.5" fill="#f4513a"/><rect x="870" y="300" width="30.5" height="30.5" fill="#f4513a"/><rect x="900" y="300" width="30.5" height="30.5" fill="#f4523a"/><rect x="930" y="300" width="30.5" height="30.5" fill="#f4553a"/><rect x="960" y="300" width="30.5" height="30.5" fill="#f4593a"/><rect x="990" y="300" width="30.5" height="30.5" fill="#f45a3a"/><rect x="1020" y="300" width="30.5" height="30.5" fill="#f45a3a"/><rect x="1050" y="300" width="30.5" height="30.5" fill="#f45a3a"/><rect x="-60" y="330" width="30.5" height="30.5" fill="#b01e8c"/><rect x="-30" y="330" width="30.5" height="30.5" fill="#b01e8c"/><rect x="0" y="330" width="30.5" height="30.5" fill="#be1a85"/><rect x="30" y="330" width="30.5" height="30.5" fill="#ce1584"/><rect x="60" y="330" width="30.5" height="30.5" fill="#d91179"/><rect x="90" y="330" width="30.5" height="30.5" fill="#e30e6c"/><rect x="120" y="330" width="30.5" height="30.5" fill="#ed0c61"/><rect x="150" y="330" width="30.5" height="30.5" fill="#f00d5d"/><rect x="180" y="330" width="30.5" height="30.5" fill="#ed1057"/><rect x="210" y="330" width="30.5" height="30.5" fill="#e81452"/><rect x="240" y="330" width="30.5" height="30.5" fill="#e31557"/><rect x="270" y="330" width="30.5" height="30.5" fill="#db175c"/><rect x="300" y="330" width="30.5" height="30.5" fill="#d31961"/><rect x="330" y="330" width="30.5" height="30.5" fill="#cb1b66"/><rect x="360" y="330" width="30.5" height="30.5" fill="#c41d6b"/><rect x="390" y="330" width="30.5" height="30.5" fill="#bc1e70"/><rect x="420" y="330" width="30.5" height="30.5" fill="#be226e"/><rect x="450" y="330" width="30.5" height="30.5" fill="#c1266a"/><rect x="480" y="330" width="30.5" height="30.5" fill="#c52967"/><rect x="510" y="330" width="30.5" height="30.5" fill="#c82d63"/><rect x="540" y="330" width="30.5" height="30.5" fill="#cb3060"/><rect x="570" y="330" width="30.5" height="30.5" fill="#cf345c"/><rect x="600" y="330" width="30.5" height="30.5" fill="#d23859"/><rect x="630" y="330" width="30.5" height="30.5" fill="#d63b55"/><rect x="660" y="330" width="30.5" height="30.5" fill="#d93f51"/><rect x="690" y="330" width="30.5" height="30.5" fill="#dc434e"/><rect x="720" y="330" width="30.5" height="30.5" fill="#e0464a"/><rect x="750" y="330" width="30.5" height="30.5" fill="#e34a47"/><rect x="780" y="330" width="30.5" height="30.5" fill="#ed4d42"/><rect x="810" y="330" width="30.5" height="30.5" fill="#f4543a"/><rect x="840" y="330" width="30.5" height="30.5" fill="#f4543a"/><rect x="870" y="330" width="30.5" height="30.5" fill="#f4543a"/><rect x="900" y="330" width="30.5" height="30.5" fill="#f4553a"/><rect x="930" y="330" width="30.5" height="30.5" fill="#f4583a"/><rect x="960" y="330" width="30.5" height="30.5" fill="#f45a3a"/><rect x="990" y="330" width="30.5" height="30.5" fill="#f55c3a"/><rect x="1020" y="330" width="30.5" height="30.5" fill="#f55c3a"/><rect x="1050" y="330" width="30.5" height="30.5" fill="#f55c3a"/><rect x="-60" y="360" width="30.5" height="30.5" fill="#b01e8c"/><rect x="-30" y="360" width="30.5" height="30.5" fill="#b01e8c"/><rect x="0" y="360" width="30.5" height="30.5" fill="#b01d8c"/><rect x="30" y="360" width="30.5" height="30.5" fill="#c0188b"/><rect x="60" y="360" width="30.5" height="30.5" fill="#cc1484"/><rect x="90" y="360" width="30.5" height="30.5" fill="#d61078"/><rect x="120" y="360" width="30.5" height="30.5" fill="#e10e70"/><rect x="150" y="360" width="30.5" height="30.5" fill="#e60e6b"/><rect x="180" y="360" width="30.5" height="30.5" fill="#e70f63"/><rect x="210" y="360" width="30.5" height="30.5" fill="#dd155c"/><rect x="240" y="360" width="30.5" height="30.5" fill="#dc1759"/><rect x="270" y="360" width="30.5" height="30.5" fill="#d8175d"/><rect x="300" y="360" width="30.5" height="30.5" fill="#d01962"/><rect x="330" y="360" width="30.5" height="30.5" fill="#c81b67"/><rect x="360" y="360" width="30.5" height="30.5" fill="#c11d6c"/><rect x="390" y="360" width="30.5" height="30.5" fill="#b91f71"/><rect x="420" y="360" width="30.5" height="30.5" fill="#b62272"/><rect x="450" y="360" width="30.5" height="30.5" fill="#ba266f"/><rect x="480" y="360" width="30.5" height="30.5" fill="#bd296b"/><rect x="510" y="360" width="30.5" height="30.5" fill="#c12d68"/><rect x="540" y="360" width="30.5" height="30.5" fill="#c43064"/><rect x="570" y="360" width="30.5" height="30.5" fill="#c73461"/><rect x="600" y="360" width="30.5" height="30.5" fill="#cb385d"/><rect x="630" y="360" width="30.5" height="30.5" fill="#ce3b59"/><rect x="660" y="360" width="30.5" height="30.5" fill="#d23f56"/><rect x="690" y="360" width="30.5" height="30.5" fill="#d54352"/><rect x="720" y="360" width="30.5" height="30.5" fill="#d9464f"/><rect x="750" y="360" width="30.5" height="30.5" fill="#e2454e"/><rect x="780" y="360" width="30.5" height="30.5" fill="#ed5042"/><rect x="810" y="360" width="30.5" height="30.5" fill="#f4573a"/><rect x="840" y="360" width="30.5" height="30.5" fill="#f4573a"/><rect x="870" y="360" width="30.5" height="30.5" fill="#f4573a"/><rect x="900" y="360" width="30.5" height="30.5" fill="#f4573a"/><rect x="930" y="360" width="30.5" height="30.5" fill="#f45a3a"/><rect x="960" y="360" width="30.5" height="30.5" fill="#f55c3a"/><rect x="990" y="360" width="30.5" height="30.5" fill="#f55c3a"/><rect x="1020" y="360" width="30.5" height="30.5" fill="#f55c3a"/><rect x="1050" y="360" width="30.5" height="30.5" fill="#f55c3a"/><rect x="-60" y="390" width="30.5" height="30.5" fill="#982490"/><rect x="-30" y="390" width="30.5" height="30.5" fill="#982490"/><rect x="0" y="390" width="30.5" height="30.5" fill="#a4208e"/><rect x="30" y="390" width="30.5" height="30.5" fill="#b21c8d"/><rect x="60" y="390" width="30.5" height="30.5" fill="#be178c"/><rect x="90" y="390" width="30.5" height="30.5" fill="#c81383"/><rect x="120" y="390" width="30.5" height="30.5" fill="#d31081"/><rect x="150" y="390" width="30.5" height="30.5" fill="#da107f"/><rect x="180" y="390" width="30.5" height="30.5" fill="#dc1178"/><rect x="210" y="390" width="30.5" height="30.5" fill="#d71468"/><rect x="240" y="390" width="30.5" height="30.5" fill="#cd1b61"/><rect x="270" y="390" width="30.5" height="30.5" fill="#cf1a60"/><rect x="300" y="390" width="30.5" height="30.5" fill="#cd1a63"/><rect x="330" y="390" width="30.5" height="30.5" fill="#c51c68"/><rect x="360" y="390" width="30.5" height="30.5" fill="#bd1e6d"/><rect x="390" y="390" width="30.5" height="30.5" fill="#b62073"/><rect x="420" y="390" width="30.5" height="30.5" fill="#af2277"/><rect x="450" y="390" width="30.5" height="30.5" fill="#b22673"/><rect x="480" y="390" width="30.5" height="30.5" fill="#b62970"/><rect x="510" y="390" width="30.5" height="30.5" fill="#b92d6c"/><rect x="540" y="390" width="30.5" height="30.5" fill="#bd3069"/><rect x="570" y="390" width="30.5" height="30.5" fill="#c03465"/><rect x="600" y="390" width="30.5" height="30.5" fill="#c33861"/><rect x="630" y="390" width="30.5" height="30.5" fill="#c73b5e"/><rect x="660" y="390" width="30.5" height="30.5" fill="#ca3f5a"/><rect x="690" y="390" width="30.5" height="30.5" fill="#cf4158"/><rect x="720" y="390" width="30.5" height="30.5" fill="#d83e59"/><rect x="750" y="390" width="30.5" height="30.5" fill="#e2484e"/><rect x="780" y="390" width="30.5" height="30.5" fill="#ed5242"/><rect x="810" y="390" width="30.5" height="30.5" fill="#f4563a"/><rect x="840" y="390" width="30.5" height="30.5" fill="#f4563a"/><rect x="870" y="390" width="30.5" height="30.5" fill="#f4563a"/><rect x="900" y="390" width="30.5" height="30.5" fill="#f5563a"/><rect x="930" y="390" width="30.5" height="30.5" fill="#f5583a"/><rect x="960" y="390" width="30.5" height="30.5" fill="#f55a3a"/><rect x="990" y="390" width="30.5" height="30.5" fill="#f5603a"/><rect x="1020" y="390" width="30.5" height="30.5" fill="#f5603a"/><rect x="1050" y="390" width="30.5" height="30.5" fill="#f5603a"/><rect x="-60" y="420" width="30.5" height="30.5" fill="#982490"/><rect x="-30" y="420" width="30.5" height="30.5" fill="#982490"/><rect x="0" y="420" width="30.5" height="30.5" fill="#96248e"/><rect x="30" y="420" width="30.5" height="30.5" fill="#a2218e"/><rect x="60" y="420" width="30.5" height="30.5" fill="#ae1c8c"/><rect x="90" y="420" width="30.5" height="30.5" fill="#b6188d"/><rect x="120" y="420" width="30.5" height="30.5" fill="#c1158b"/><rect x="150" y="420" width="30.5" height="30.5" fill="#c6148b"/><rect x="180" y="420" width="30.5" height="30.5" fill="#cf138a"/><rect x="210" y="420" width="30.5" height="30.5" fill="#cc167d"/><rect x="240" y="420" width="30.5" height="30.5" fill="#c7196d"/><rect x="270" y="420" width="30.5" height="30.5" fill="#be2067"/><rect x="300" y="420" width="30.5" height="30.5" fill="#c31d67"/><rect x="330" y="420" width="30.5" height="30.5" fill="#c21d6a"/><rect x="360" y="420" width="30.5" height="30.5" fill="#ba1f6f"/><rect x="390" y="420" width="30.5" height="30.5" fill="#b22174"/><rect x="420" y="420" width="30.5" height="30.5" fill="#ab2279"/><rect x="450" y="420" width="30.5" height="30.5" fill="#ab2678"/><rect x="480" y="420" width="30.5" height="30.5" fill="#ae2974"/><rect x="510" y="420" width="30.5" height="30.5" fill="#b22d71"/><rect x="540" y="420" width="30.5" height="30.5" fill="#b5316d"/><rect x="570" y="420" width="30.5" height="30.5" fill="#b9346a"/><rect x="600" y="420" width="30.5" height="30.5" fill="#bc3866"/><rect x="630" y="420" width="30.5" height="30.5" fill="#bf3b62"/><rect x="660" y="420" width="30.5" height="30.5" fill="#c43d60"/><rect x="690" y="420" width="30.5" height="30.5" fill="#cd3a62"/><rect x="720" y="420" width="30.5" height="30.5" fill="#d8415a"/><rect x="750" y="420" width="30.5" height="30.5" fill="#e24a4e"/><rect x="780" y="420" width="30.5" height="30.5" fill="#ee4b43"/><rect x="810" y="420" width="30.5" height="30.5" fill="#f8413d"/><rect x="840" y="420" width="30.5" height="30.5" fill="#f8413d"/><rect x="870" y="420" width="30.5" height="30.5" fill="#f8413d"/><rect x="900" y="420" width="30.5" height="30.5" fill="#f8413d"/><rect x="930" y="420" width="30.5" height="30.5" fill="#f8413d"/><rect x="960" y="420" width="30.5" height="30.5" fill="#f8423d"/><rect x="990" y="420" width="30.5" height="30.5" fill="#f84c3c"/><rect x="1020" y="420" width="30.5" height="30.5" fill="#f84c3c"/><rect x="1050" y="420" width="30.5" height="30.5" fill="#f84c3c"/><rect x="-60" y="450" width="30.5" height="30.5" fill="#7a2e8a"/><rect x="-30" y="450" width="30.5" height="30.5" fill="#7a2e8a"/><rect x="0" y="450" width="30.5" height="30.5" fill="#872a8b"/><rect x="30" y="450" width="30.5" height="30.5" fill="#90278c"/><rect x="60" y="450" width="30.5" height="30.5" fill="#9b228e"/><rect x="90" y="450" width="30.5" height="30.5" fill="#a31e8f"/><rect x="120" y="450" width="30.5" height="30.5" fill="#ab1b8e"/><rect x="150" y="450" width="30.5" height="30.5" fill="#ab1a8e"/><rect x="180" y="450" width="30.5" height="30.5" fill="#b41a8c"/><rect x="210" y="450" width="30.5" height="30.5" fill="#bc1a8a"/><rect x="240" y="450" width="30.5" height="30.5" fill="#bc1b82"/><rect x="270" y="450" width="30.5" height="30.5" fill="#b81e73"/><rect x="300" y="450" width="30.5" height="30.5" fill="#b2236e"/><rect x="330" y="450" width="30.5" height="30.5" fill="#b6206e"/><rect x="360" y="450" width="30.5" height="30.5" fill="#b71f70"/><rect x="390" y="450" width="30.5" height="30.5" fill="#af2175"/><rect x="420" y="450" width="30.5" height="30.5" fill="#a8237a"/><rect x="450" y="450" width="30.5" height="30.5" fill="#a4267c"/><rect x="480" y="450" width="30.5" height="30.5" fill="#a72979"/><rect x="510" y="450" width="30.5" height="30.5" fill="#aa2d75"/><rect x="540" y="450" width="30.5" height="30.5" fill="#ae3172"/><rect x="570" y="450" width="30.5" height="30.5" fill="#b1346e"/><rect x="600" y="450" width="30.5" height="30.5" fill="#b5386a"/><rect x="630" y="450" width="30.5" height="30.5" fill="#ba3969"/><rect x="660" y="450" width="30.5" height="30.5" fill="#c3366a"/><rect x="690" y="450" width="30.5" height="30.5" fill="#cd3966"/><rect x="720" y="450" width="30.5" height="30.5" fill="#d8435a"/><rect x="750" y="450" width="30.5" height="30.5" fill="#e4414f"/><rect x="780" y="450" width="30.5" height="30.5" fill="#ee344e"/><rect x="810" y="450" width="30.5" height="30.5" fill="#fb1144"/><rect x="840" y="450" width="30.5" height="30.5" fill="#fb1144"/><rect x="870" y="450" width="30.5" height="30.5" fill="#fb1144"/><rect x="900" y="450" width="30.5" height="30.5" fill="#fb1144"/><rect x="930" y="450" width="30.5" height="30.5" fill="#fb1244"/><rect x="960" y="450" width="30.5" height="30.5" fill="#fb1244"/><rect x="990" y="450" width="30.5" height="30.5" fill="#fb1442"/><rect x="1020" y="450" width="30.5" height="30.5" fill="#fb1442"/><rect x="1050" y="450" width="30.5" height="30.5" fill="#fb1442"/><rect x="-60" y="480" width="30.5" height="30.5" fill="#7a2e8a"/><rect x="-30" y="480" width="30.5" height="30.5" fill="#7a2e8a"/><rect x="0" y="480" width="30.5" height="30.5" fill="#762f8a"/><rect x="30" y="480" width="30.5" height="30.5" fill="#802c8b"/><rect x="60" y="480" width="30.5" height="30.5" fill="#872a8d"/><rect x="90" y="480" width="30.5" height="30.5" fill="#8f2690"/><rect x="120" y="480" width="30.5" height="30.5" fill="#962290"/><rect x="150" y="480" width="30.5" height="30.5" fill="#962190"/><rect x="180" y="480" width="30.5" height="30.5" fill="#98208f"/><rect x="210" y="480" width="30.5" height="30.5" fill="#a2228b"/><rect x="240" y="480" width="30.5" height="30.5" fill="#a9218a"/><rect x="270" y="480" width="30.5" height="30.5" fill="#ad2087"/><rect x="300" y="480" width="30.5" height="30.5" fill="#a82378"/><rect x="330" y="480" width="30.5" height="30.5" fill="#a52675"/><rect x="360" y="480" width="30.5" height="30.5" fill="#aa2375"/><rect x="390" y="480" width="30.5" height="30.5" fill="#ac2276"/><rect x="420" y="480" width="30.5" height="30.5" fill="#a4247b"/><rect x="450" y="480" width="30.5" height="30.5" fill="#9d2680"/><rect x="480" y="480" width="30.5" height="30.5" fill="#a0297d"/><rect x="510" y="480" width="30.5" height="30.5" fill="#a32d7a"/><rect x="540" y="480" width="30.5" height="30.5" fill="#a63176"/><rect x="570" y="480" width="30.5" height="30.5" fill="#aa3472"/><rect x="600" y="480" width="30.5" height="30.5" fill="#b03471"/><rect x="630" y="480" width="30.5" height="30.5" fill="#b93173"/><rect x="660" y="480" width="30.5" height="30.5" fill="#c23171"/><rect x="690" y="480" width="30.5" height="30.5" fill="#cd3b66"/><rect x="720" y="480" width="30.5" height="30.5" fill="#d83860"/><rect x="750" y="480" width="30.5" height="30.5" fill="#df3563"/><rect x="780" y="480" width="30.5" height="30.5" fill="#f01156"/><rect x="810" y="480" width="30.5" height="30.5" fill="#f90c51"/><rect x="840" y="480" width="30.5" height="30.5" fill="#f90c51"/><rect x="870" y="480" width="30.5" height="30.5" fill="#f90c51"/><rect x="900" y="480" width="30.5" height="30.5" fill="#f90c50"/><rect x="930" y="480" width="30.5" height="30.5" fill="#fa0d4f"/><rect x="960" y="480" width="30.5" height="30.5" fill="#fa0c4f"/><rect x="990" y="480" width="30.5" height="30.5" fill="#fb0c4a"/><rect x="1020" y="480" width="30.5" height="30.5" fill="#fb0c4a"/><rect x="1050" y="480" width="30.5" height="30.5" fill="#fb0c4a"/><rect x="-60" y="510" width="30.5" height="30.5" fill="#5e3688"/><rect x="-30" y="510" width="30.5" height="30.5" fill="#5e3688"/><rect x="0" y="510" width="30.5" height="30.5" fill="#683388"/><rect x="30" y="510" width="30.5" height="30.5" fill="#6e3289"/><rect x="60" y="510" width="30.5" height="30.5" fill="#74308a"/><rect x="90" y="510" width="30.5" height="30.5" fill="#7b2e8d"/><rect x="120" y="510" width="30.5" height="30.5" fill="#802c90"/><rect x="150" y="510" width="30.5" height="30.5" fill="#822b90"/><rect x="180" y="510" width="30.5" height="30.5" fill="#832a8e"/><rect x="210" y="510" width="30.5" height="30.5" fill="#87298d"/><rect x="240" y="510" width="30.5" height="30.5" fill="#922b8a"/><rect x="270" y="510" width="30.5" height="30.5" fill="#97288a"/><rect x="300" y="510" width="30.5" height="30.5" fill="#9b2689"/><rect x="330" y="510" width="30.5" height="30.5" fill="#98297d"/><rect x="360" y="510" width="30.5" height="30.5" fill="#99297c"/><rect x="390" y="510" width="30.5" height="30.5" fill="#9d277c"/><rect x="420" y="510" width="30.5" height="30.5" fill="#a1247d"/><rect x="450" y="510" width="30.5" height="30.5" fill="#992682"/><rect x="480" y="510" width="30.5" height="30.5" fill="#982982"/><rect x="510" y="510" width="30.5" height="30.5" fill="#9c2d7e"/><rect x="540" y="510" width="30.5" height="30.5" fill="#9f317b"/><rect x="570" y="510" width="30.5" height="30.5" fill="#a6307a"/><rect x="600" y="510" width="30.5" height="30.5" fill="#af2d7c"/><rect x="630" y="510" width="30.5" height="30.5" fill="#b82a7d"/><rect x="660" y="510" width="30.5" height="30.5" fill="#c33172"/><rect x="690" y="510" width="30.5" height="30.5" fill="#cc2f71"/><rect x="720" y="510" width="30.5" height="30.5" fill="#d32c75"/><rect x="750" y="510" width="30.5" height="30.5" fill="#e1136c"/><rect x="780" y="510" width="30.5" height="30.5" fill="#ec106b"/><rect x="810" y="510" width="30.5" height="30.5" fill="#f20f6c"/><rect x="840" y="510" width="30.5" height="30.5" fill="#f20f6c"/><rect x="870" y="510" width="30.5" height="30.5" fill="#f20f6c"/><rect x="900" y="510" width="30.5" height="30.5" fill="#f20f6c"/><rect x="930" y="510" width="30.5" height="30.5" fill="#f30f6a"/><rect x="960" y="510" width="30.5" height="30.5" fill="#f30f68"/><rect x="990" y="510" width="30.5" height="30.5" fill="#f60f62"/><rect x="1020" y="510" width="30.5" height="30.5" fill="#f60f62"/><rect x="1050" y="510" width="30.5" height="30.5" fill="#f60f62"/><rect x="-60" y="540" width="30.5" height="30.5" fill="#5e3688"/><rect x="-30" y="540" width="30.5" height="30.5" fill="#5e3688"/><rect x="0" y="540" width="30.5" height="30.5" fill="#5b3788"/><rect x="30" y="540" width="30.5" height="30.5" fill="#603688"/><rect x="60" y="540" width="30.5" height="30.5" fill="#653588"/><rect x="90" y="540" width="30.5" height="30.5" fill="#6a338b"/><rect x="120" y="540" width="30.5" height="30.5" fill="#70328e"/><rect x="150" y="540" width="30.5" height="30.5" fill="#73328e"/><rect x="180" y="540" width="30.5" height="30.5" fill="#70338e"/><rect x="210" y="540" width="30.5" height="30.5" fill="#6f318a"/><rect x="240" y="540" width="30.5" height="30.5" fill="#77318b"/><rect x="270" y="540" width="30.5" height="30.5" fill="#7f328a"/><rect x="300" y="540" width="30.5" height="30.5" fill="#842f8a"/><rect x="330" y="540" width="30.5" height="30.5" fill="#892d89"/><rect x="360" y="540" width="30.5" height="30.5" fill="#882e83"/><rect x="390" y="540" width="30.5" height="30.5" fill="#8c2c82"/><rect x="420" y="540" width="30.5" height="30.5" fill="#912a83"/><rect x="450" y="540" width="30.5" height="30.5" fill="#962783"/><rect x="480" y="540" width="30.5" height="30.5" fill="#912986"/><rect x="510" y="540" width="30.5" height="30.5" fill="#942d83"/><rect x="540" y="540" width="30.5" height="30.5" fill="#9c2c83"/><rect x="570" y="540" width="30.5" height="30.5" fill="#a52984"/><rect x="600" y="540" width="30.5" height="30.5" fill="#ae2686"/><rect x="630" y="540" width="30.5" height="30.5" fill="#b8287f"/><rect x="660" y="540" width="30.5" height="30.5" fill="#bf2583"/><rect x="690" y="540" width="30.5" height="30.5" fill="#c62386"/><rect x="720" y="540" width="30.5" height="30.5" fill="#d21582"/><rect x="750" y="540" width="30.5" height="30.5" fill="#db1383"/><rect x="780" y="540" width="30.5" height="30.5" fill="#e11184"/><rect x="810" y="540" width="30.5" height="30.5" fill="#e71083"/><rect x="840" y="540" width="30.5" height="30.5" fill="#e71082"/><rect x="870" y="540" width="30.5" height="30.5" fill="#e71082"/><rect x="900" y="540" width="30.5" height="30.5" fill="#e81082"/><rect x="930" y="540" width="30.5" height="30.5" fill="#eb1080"/><rect x="960" y="540" width="30.5" height="30.5" fill="#ee107e"/><rect x="990" y="540" width="30.5" height="30.5" fill="#f0107a"/><rect x="1020" y="540" width="30.5" height="30.5" fill="#f0107a"/><rect x="1050" y="540" width="30.5" height="30.5" fill="#f0107a"/><rect x="-60" y="570" width="30.5" height="30.5" fill="#4a3c84"/><rect x="-30" y="570" width="30.5" height="30.5" fill="#4a3c84"/><rect x="0" y="570" width="30.5" height="30.5" fill="#503a86"/><rect x="30" y="570" width="30.5" height="30.5" fill="#543886"/><rect x="60" y="570" width="30.5" height="30.5" fill="#583888"/><rect x="90" y="570" width="30.5" height="30.5" fill="#5d388a"/><rect x="120" y="570" width="30.5" height="30.5" fill="#62388c"/><rect x="150" y="570" width="30.5" height="30.5" fill="#66388c"/><rect x="180" y="570" width="30.5" height="30.5" fill="#64388b"/><rect x="210" y="570" width="30.5" height="30.5" fill="#5e3989"/><rect x="240" y="570" width="30.5" height="30.5" fill="#5e3a88"/><rect x="270" y="570" width="30.5" height="30.5" fill="#663a8a"/><rect x="300" y="570" width="30.5" height="30.5" fill="#6c398a"/><rect x="330" y="570" width="30.5" height="30.5" fill="#71368a"/><rect x="360" y="570" width="30.5" height="30.5" fill="#763489"/><rect x="390" y="570" width="30.5" height="30.5" fill="#7b3289"/><rect x="420" y="570" width="30.5" height="30.5" fill="#802f89"/><rect x="450" y="570" width="30.5" height="30.5" fill="#842d8a"/><rect x="480" y="570" width="30.5" height="30.5" fill="#892a8a"/><rect x="510" y="570" width="30.5" height="30.5" fill="#92288b"/><rect x="540" y="570" width="30.5" height="30.5" fill="#9a248d"/><rect x="570" y="570" width="30.5" height="30.5" fill="#a4228e"/><rect x="600" y="570" width="30.5" height="30.5" fill="#ac1f91"/><rect x="630" y="570" width="30.5" height="30.5" fill="#b31c94"/><rect x="660" y="570" width="30.5" height="30.5" fill="#ba1a97"/><rect x="690" y="570" width="30.5" height="30.5" fill="#c1189a"/><rect x="720" y="570" width="30.5" height="30.5" fill="#c7169a"/><rect x="750" y="570" width="30.5" height="30.5" fill="#cd159a"/><rect x="780" y="570" width="30.5" height="30.5" fill="#d4139a"/><rect x="810" y="570" width="30.5" height="30.5" fill="#d91299"/><rect x="840" y="570" width="30.5" height="30.5" fill="#de1195"/><rect x="870" y="570" width="30.5" height="30.5" fill="#e21092"/><rect x="900" y="570" width="30.5" height="30.5" fill="#e6108f"/><rect x="930" y="570" width="30.5" height="30.5" fill="#e9108c"/><rect x="960" y="570" width="30.5" height="30.5" fill="#ed108a"/><rect x="990" y="570" width="30.5" height="30.5" fill="#f01088"/><rect x="1020" y="570" width="30.5" height="30.5" fill="#f01088"/><rect x="1050" y="570" width="30.5" height="30.5" fill="#f01088"/><rect x="-60" y="600" width="30.5" height="30.5" fill="#4a3c84"/><rect x="-30" y="600" width="30.5" height="30.5" fill="#4a3c84"/><rect x="0" y="600" width="30.5" height="30.5" fill="#4a3c84"/><rect x="30" y="600" width="30.5" height="30.5" fill="#4e3a86"/><rect x="60" y="600" width="30.5" height="30.5" fill="#543a88"/><rect x="90" y="600" width="30.5" height="30.5" fill="#543a88"/><rect x="120" y="600" width="30.5" height="30.5" fill="#5c3a8a"/><rect x="150" y="600" width="30.5" height="30.5" fill="#623a8a"/><rect x="180" y="600" width="30.5" height="30.5" fill="#623a8a"/><rect x="210" y="600" width="30.5" height="30.5" fill="#5a3a88"/><rect x="240" y="600" width="30.5" height="30.5" fill="#5a3a88"/><rect x="270" y="600" width="30.5" height="30.5" fill="#6a3a8a"/><rect x="300" y="600" width="30.5" height="30.5" fill="#6a3a8a"/><rect x="330" y="600" width="30.5" height="30.5" fill="#6a3a8a"/><rect x="360" y="600" width="30.5" height="30.5" fill="#7a3289"/><rect x="390" y="600" width="30.5" height="30.5" fill="#7a3289"/><rect x="420" y="600" width="30.5" height="30.5" fill="#7a3289"/><rect x="450" y="600" width="30.5" height="30.5" fill="#8a2a8a"/><rect x="480" y="600" width="30.5" height="30.5" fill="#8a2a8a"/><rect x="510" y="600" width="30.5" height="30.5" fill="#8a2a8a"/><rect x="540" y="600" width="30.5" height="30.5" fill="#a8208f"/><rect x="570" y="600" width="30.5" height="30.5" fill="#a8208f"/><rect x="600" y="600" width="30.5" height="30.5" fill="#a8208f"/><rect x="630" y="600" width="30.5" height="30.5" fill="#a8208f"/><rect x="660" y="600" width="30.5" height="30.5" fill="#c0189a"/><rect x="690" y="600" width="30.5" height="30.5" fill="#c0189a"/><rect x="720" y="600" width="30.5" height="30.5" fill="#c0189a"/><rect x="750" y="600" width="30.5" height="30.5" fill="#d8129a"/><rect x="780" y="600" width="30.5" height="30.5" fill="#d8129a"/><rect x="810" y="600" width="30.5" height="30.5" fill="#d8129a"/><rect x="840" y="600" width="30.5" height="30.5" fill="#d8129a"/><rect x="870" y="600" width="30.5" height="30.5" fill="#e41090"/><rect x="900" y="600" width="30.5" height="30.5" fill="#e41090"/><rect x="930" y="600" width="30.5" height="30.5" fill="#e41090"/><rect x="960" y="600" width="30.5" height="30.5" fill="#f01088"/><rect x="990" y="600" width="30.5" height="30.5" fill="#f01088"/><rect x="1020" y="600" width="30.5" height="30.5" fill="#f01088"/><rect x="1050" y="600" width="30.5" height="30.5" fill="#f01088"/><rect x="-60" y="630" width="30.5" height="30.5" fill="#4a3c84"/><rect x="-30" y="630" width="30.5" height="30.5" fill="#4a3c84"/><rect x="0" y="630" width="30.5" height="30.5" fill="#4a3c84"/><rect x="30" y="630" width="30.5" height="30.5" fill="#4e3a86"/><rect x="60" y="630" width="30.5" height="30.5" fill="#543a88"/><rect x="90" y="630" width="30.5" height="30.5" fill="#543a88"/><rect x="120" y="630" width="30.5" height="30.5" fill="#5c3a8a"/><rect x="150" y="630" width="30.5" height="30.5" fill="#623a8a"/><rect x="180" y="630" width="30.5" height="30.5" fill="#623a8a"/><rect x="210" y="630" width="30.5" height="30.5" fill="#5a3a88"/><rect x="240" y="630" width="30.5" height="30.5" fill="#5a3a88"/><rect x="270" y="630" width="30.5" height="30.5" fill="#6a3a8a"/><rect x="300" y="630" width="30.5" height="30.5" fill="#6a3a8a"/><rect x="330" y="630" width="30.5" height="30.5" fill="#6a3a8a"/><rect x="360" y="630" width="30.5" height="30.5" fill="#7a3289"/><rect x="390" y="630" width="30.5" height="30.5" fill="#7a3289"/><rect x="420" y="630" width="30.5" height="30.5" fill="#7a3289"/><rect x="450" y="630" width="30.5" height="30.5" fill="#8a2a8a"/><rect x="480" y="630" width="30.5" height="30.5" fill="#8a2a8a"/><rect x="510" y="630" width="30.5" height="30.5" fill="#8a2a8a"/><rect x="540" y="630" width="30.5" height="30.5" fill="#a8208f"/><rect x="570" y="630" width="30.5" height="30.5" fill="#a8208f"/><rect x="600" y="630" width="30.5" height="30.5" fill="#a8208f"/><rect x="630" y="630" width="30.5" height="30.5" fill="#a8208f"/><rect x="660" y="630" width="30.5" height="30.5" fill="#c0189a"/><rect x="690" y="630" width="30.5" height="30.5" fill="#c0189a"/><rect x="720" y="630" width="30.5" height="30.5" fill="#c0189a"/><rect x="750" y="630" width="30.5" height="30.5" fill="#d8129a"/><rect x="780" y="630" width="30.5" height="30.5" fill="#d8129a"/><rect x="810" y="630" width="30.5" height="30.5" fill="#d8129a"/><rect x="840" y="630" width="30.5" height="30.5" fill="#d8129a"/><rect x="870" y="630" width="30.5" height="30.5" fill="#e41090"/><rect x="900" y="630" width="30.5" height="30.5" fill="#e41090"/><rect x="930" y="630" width="30.5" height="30.5" fill="#e41090"/><rect x="960" y="630" width="30.5" height="30.5" fill="#f01088"/><rect x="990" y="630" width="30.5" height="30.5" fill="#f01088"/><rect x="1020" y="630" width="30.5" height="30.5" fill="#f01088"/><rect x="1050" y="630" width="30.5" height="30.5" fill="#f01088"/><rect x="-60" y="660" width="30.5" height="30.5" fill="#4a3c84"/><rect x="-30" y="660" width="30.5" height="30.5" fill="#4a3c84"/><rect x="0" y="660" width="30.5" height="30.5" fill="#4a3c84"/><rect x="30" y="660" width="30.5" height="30.5" fill="#4e3a86"/><rect x="60" y="660" width="30.5" height="30.5" fill="#543a88"/><rect x="90" y="660" width="30.5" height="30.5" fill="#543a88"/><rect x="120" y="660" width="30.5" height="30.5" fill="#5c3a8a"/><rect x="150" y="660" width="30.5" height="30.5" fill="#623a8a"/><rect x="180" y="660" width="30.5" height="30.5" fill="#623a8a"/><rect x="210" y="660" width="30.5" height="30.5" fill="#5a3a88"/><rect x="240" y="660" width="30.5" height="30.5" fill="#5a3a88"/><rect x="270" y="660" width="30.5" height="30.5" fill="#6a3a8a"/><rect x="300" y="660" width="30.5" height="30.5" fill="#6a3a8a"/><rect x="330" y="660" width="30.5" height="30.5" fill="#6a3a8a"/><rect x="360" y="660" width="30.5" height="30.5" fill="#7a3289"/><rect x="390" y="660" width="30.5" height="30.5" fill="#7a3289"/><rect x="420" y="660" width="30.5" height="30.5" fill="#7a3289"/><rect x="450" y="660" width="30.5" height="30.5" fill="#8a2a8a"/><rect x="480" y="660" width="30.5" height="30.5" fill="#8a2a8a"/><rect x="510" y="660" width="30.5" height="30.5" fill="#8a2a8a"/><rect x="540" y="660" width="30.5" height="30.5" fill="#a8208f"/><rect x="570" y="660" width="30.5" height="30.5" fill="#a8208f"/><rect x="600" y="660" width="30.5" height="30.5" fill="#a8208f"/><rect x="630" y="660" width="30.5" height="30.5" fill="#a8208f"/><rect x="660" y="660" width="30.5" height="30.5" fill="#c0189a"/><rect x="690" y="660" width="30.5" height="30.5" fill="#c0189a"/><rect x="720" y="660" width="30.5" height="30.5" fill="#c0189a"/><rect x="750" y="660" width="30.5" height="30.5" fill="#d8129a"/><rect x="780" y="660" width="30.5" height="30.5" fill="#d8129a"/><rect x="810" y="660" width="30.5" height="30.5" fill="#d8129a"/><rect x="840" y="660" width="30.5" height="30.5" fill="#d8129a"/><rect x="870" y="660" width="30.5" height="30.5" fill="#e41090"/><rect x="900" y="660" width="30.5" height="30.5" fill="#e41090"/><rect x="930" y="660" width="30.5" height="30.5" fill="#e41090"/><rect x="960" y="660" width="30.5" height="30.5" fill="#f01088"/><rect x="990" y="660" width="30.5" height="30.5" fill="#f01088"/><rect x="1020" y="660" width="30.5" height="30.5" fill="#f01088"/><rect x="1050" y="660" width="30.5" height="30.5" fill="#f01088"/></g>
<path d="M-60,-60 L320,-60 L320,320 L183,246 L0,120 L-60,90 Z" fill="url(#gCoral)" filter="url(#bsoft)"/>
<path d="M0,-60 L270,-80 L760,210 L600,400 Z" fill="#ff1270" filter="url(#bpink)"/>
<path d="M236,0 L1000,0 L1000,197 C960,190 880,178 816,170 L700,150 L311,40 Z" fill="url(#gBlue)" filter="url(#b1)"/>
<path d="M780,66 C860,72 940,84 1010,98 L1010,160 C940,140 860,125 780,112 Z" fill="#2a90d4" opacity="0.2" filter="url(#b1)"/>
<path d="M780,112 C860,125 940,140 1010,156 L1010,200 L780,165 Z" fill="#1a78c0" opacity="0.2" filter="url(#b1)"/>
<path d="M816,169 C880,176 960,190 1000,198 L1000,281 C940,256 870,236 816,227 L780,220 L780,160 Z" fill="url(#gWhite)" filter="url(#b1)"/>
<path d="M780,220 L816,227 C870,236 940,256 1000,281 L1000,365 L935,365 C915,360 895,340 880,330 C860,318 840,312 816,307 L780,300 Z" fill="url(#gOr)" filter="url(#b1)"/>
</svg>

<div id="win"></div>
<!-- traffic lights -->
<div class="abs" style="left:186.5px;top:34.2px;width:7.4px;height:7.4px;border-radius:50%;background:radial-gradient(#e85a50 30%,#f0847a 70%);box-shadow:0 0 0 0.6px #3a1c1c"></div>
<div class="abs" style="left:197.5px;top:34.2px;width:7.4px;height:7.4px;border-radius:50%;background:radial-gradient(#eab03a 30%,#f7d266 70%);box-shadow:0 0 0 0.6px #3a2c10"></div>
<div class="abs" style="left:208.5px;top:34.2px;width:7.4px;height:7.4px;border-radius:50%;background:radial-gradient(#3ea83a 30%,#5cc454 70%);box-shadow:0 0 0 0.6px #163a16"></div>
<div class="abs" style="left:-1px;top:33px;width:1000px;text-align:center;font-size:7.2px;font-weight:bold;color:#dcdadc;padding-left:0px">Без названия</div>
<!-- toolbar icons -->
<svg class="abs" style="left:190px;top:45px" width="80" height="16" viewBox="190 45 80 16">
<path d="M196.3,53.2 L198.3,55.5 L203,50.8" fill="none" stroke="#eeeeee" stroke-width="1.5" stroke-linecap="round" stroke-linejoin="round"/>
<rect x="225.8" y="50.4" width="5.4" height="5.2" fill="#6a686a"/>
<path d="M246.2,50 L251.6,53 L246.2,56 Z" fill="#d0d0d0"/>
<path d="M255.2,52.6 L257,54.4 L258.8,52.6" fill="none" stroke="#bbbbbb" stroke-width="0.9"/>
</svg>
<div class="lbl" style="left:188px;top:62px">Compile</div>
<div class="lbl" style="left:231px;top:62px">Action</div>
<svg class="abs" style="left:555px;top:44px" width="260" height="20" viewBox="555 44 260 20">
<path d="M569.4,49.4 L572.6,52.8 L569.4,56.2 L566.2,52.8 Z" fill="none" stroke="#dadada" stroke-width="1.4" stroke-linejoin="round"/>
<path d="M565,51.2 L566.6,52 M565,54.4 L566.6,53.6 M573.8,51.2 L572.2,52 M573.8,54.4 L572.2,53.6 M569.4,48 L569.4,49" stroke="#9a9a9a" stroke-width="0.8"/>
<circle cx="569.4" cy="52.8" r="0.8" fill="#777"/>
<path d="M600.8,55 L602.6,54.6 L604.3,52.6 L605.6,54.4 L607.2,49.5 L608.8,54.4 L610.1,52.6 L611.8,54.6 L613.8,55" fill="none" stroke="#dcdcdc" stroke-width="1.1" stroke-linejoin="round" stroke-linecap="round"/>
<circle cx="753.5" cy="54.2" r="2.3" fill="none" stroke="#5cb6f0" stroke-width="1.3"/>
<circle cx="758.8" cy="51.2" r="2.3" fill="none" stroke="#5cb6f0" stroke-width="1.3"/>
<rect x="775" y="51.5" width="8" height="4.8" fill="#e0e0e0"/>
<path d="M777.2,51.5 L777.6,49.4 L780.4,49.4 L780.8,51.5" fill="none" stroke="#e0e0e0" stroke-width="0.9"/>
<line x1="775" y1="53.6" x2="783" y2="53.6" stroke="#555" stroke-width="0.6"/>
<circle cx="801.8" cy="52.8" r="4.4" fill="#e8e8e8"/>
<rect x="801.2" y="52" width="1.3" height="3.2" fill="#333"/>
<circle cx="801.85" cy="50.5" r="0.75" fill="#333"/>
</svg>
<div class="lbl" style="left:554px;top:62px">Debugging</div>
<div class="lbl" style="left:594px;top:62px">Event Log</div>
<div class="lbl" style="left:676px;top:62px">Timer</div>
<div class="lbl" style="left:771px;top:62px">Show</div>
<!-- timer -->
<div class="abs" style="left:644.5px;top:45px;width:79px;height:16.5px;background:#141214;border:1px solid #403e40;border-radius:1px"></div>
<svg class="abs" style="left:644px;top:45px" width="80" height="17" viewBox="644 45 80 17" id="timer"><rect x="649.6" y="47.9" width="6.2" height="11.2" rx="1.6" fill="none" stroke="#a8a8a8" stroke-width="1.35"/><line x1="648.9" y1="53.5" x2="656.5" y2="53.5" stroke="#141214" stroke-width="0.8"/><rect x="660.6" y="47.9" width="6.2" height="11.2" rx="1.6" fill="none" stroke="#a8a8a8" stroke-width="1.35"/><line x1="659.9" y1="53.5" x2="667.5" y2="53.5" stroke="#141214" stroke-width="0.8"/><rect x="670.6" y="47.9" width="6.2" height="11.2" rx="1.6" fill="none" stroke="#a8a8a8" stroke-width="1.35"/><line x1="669.9" y1="53.5" x2="677.5" y2="53.5" stroke="#141214" stroke-width="0.8"/><rect x="682.0" y="47.9" width="6.2" height="11.2" rx="1.6" fill="none" stroke="#a8a8a8" stroke-width="1.35"/><line x1="681.3" y1="53.5" x2="688.9" y2="53.5" stroke="#141214" stroke-width="0.8"/><rect x="691.9" y="47.9" width="6.2" height="11.2" rx="1.6" fill="none" stroke="#a8a8a8" stroke-width="1.35"/><line x1="691.2" y1="53.5" x2="698.8" y2="53.5" stroke="#141214" stroke-width="0.8"/><rect x="703.6" y="47.9" width="6.2" height="11.2" rx="1.6" fill="none" stroke="#a8a8a8" stroke-width="1.35"/><line x1="702.9" y1="53.5" x2="710.5" y2="53.5" stroke="#141214" stroke-width="0.8"/><rect x="713.1" y="47.9" width="6.2" height="11.2" rx="1.6" fill="none" stroke="#a8a8a8" stroke-width="1.35"/><line x1="712.4" y1="53.5" x2="720.0" y2="53.5" stroke="#141214" stroke-width="0.8"/><circle cx="658.5" cy="50.6" r="0.55" fill="#9c9c9c"/><circle cx="658.5" cy="56.4" r="0.55" fill="#9c9c9c"/><circle cx="679.6" cy="50.6" r="0.55" fill="#9c9c9c"/><circle cx="679.6" cy="56.4" r="0.55" fill="#9c9c9c"/><circle cx="700.8" cy="58.6" r="0.6" fill="#9c9c9c"/></svg>
<!-- toolbar bottom line -->
<div class="abs" style="left:183px;top:71px;width:633px;height:1px;background:#1c1a1c"></div>
<!-- status bar -->
<div class="abs" style="left:183px;top:72px;width:399px;height:12px;background:linear-gradient(#3a383a,#323032)"></div>
<div class="abs" style="left:185px;top:75px;font-size:6.5px;color:#e0e0e0;white-space:nowrap">6:2 &#8710; 29&nbsp;&nbsp;on run</div>
<svg class="abs" style="left:575px;top:74px" width="6" height="9" viewBox="0 0 6 9"><path d="M1.3,3.8 L3,1.6 L4.7,3.8 Z M1.3,5.2 L3,7.4 L4.7,5.2 Z" fill="#c8c8c8"/></svg>
<!-- editor -->
<div class="abs" style="left:183px;top:84px;width:391px;height:1px;background:#161616"></div>
<div class="abs" style="left:183px;top:85px;width:2px;height:476px;background:#363436"></div><div class="abs" style="left:185px;top:85px;width:1px;height:476px;background:#0c0c0c"></div>
<div class="abs" style="left:186px;top:85px;width:388px;height:468px;background:#ffffff"></div>
<div class="abs" style="left:186px;top:553px;width:13px;height:8px;background:#ffffff"></div>
<div class="abs" style="left:198.7px;top:85px;width:1.3px;height:468px;background:#e2e2e2"></div>
<div class="abs" style="left:200px;top:131px;width:374px;height:11.5px;background:#fcfae0"></div>
<div class="abs" style="left:574px;top:85px;width:8px;height:476px;background:#2c2c2c"></div>
<div class="abs" style="left:575px;top:86.5px;width:6px;height:6px;background:#6a6a6a;border-radius:1px"></div>
<div class="abs" style="left:575px;top:95px;width:6px;height:6px;background:#8a8a8a;border-radius:1px"></div>
<div class="abs" style="left:199px;top:553px;width:383px;height:1px;background:#161616"></div>
<div class="abs" style="left:199px;top:554px;width:383px;height:7px;background:#2e2e2e"></div>
<div class="abs" style="left:200.5px;top:554.5px;width:5px;height:6px;background:#6a6a6a;border-radius:1px"></div>
<div class="abs" style="left:582px;top:72px;width:1px;height:489px;background:#141414"></div>
<!-- code -->
<div class="abs code" style="left:203px;top:87px">
<div class="ln"><b>use</b> <i style="color:#9a5cdb">AppleScript</i> <span style="color:#3a4fcc">version</span> <b>"2.4"</b> <span style="color:#6e6e6e">-- Yosemite (10.10) or later</span></div>
<div class="ln"><b>use</b> <i style="color:#2242d0">framework</i> "Foundation"</div>
<div class="ln"><b>use</b> <i style="color:#2a48d4">scripting additions</i></div>
<div class="ln">&nbsp;</div>
<div class="ln"><b>on</b> <b style="color:#1a3acc">run</b></div>
<div class="ln" style="height:10.7px">&nbsp;</div>
<div class="ln"><b>end</b> <b style="color:#1a3acc">run</b></div>
</div>
<div class="abs" style="left:215.8px;top:132.2px;width:78.2px;height:9.8px;background:#4a6896;border:1px solid #1c2c52"></div>
<div class="abs" style="left:217px;top:132.5px;font-size:7px;color:#0c1424;white-space:nowrap;line-height:9px;text-shadow:0.2px 0 0 #0c1424"><span style="color:#a8b8d0">--</span> your code goes here<span style="color:#a8b8d0">...</span></div>
<svg class="abs" style="left:190px;top:123px" width="10" height="28" viewBox="190 123 10 28">
<path d="M192,125.4 L196.8,125.4 L194.4,129.4 Z" fill="#5a5a5a"/>
<path d="M192.6,148.6 L196.2,148.6 L194.4,145.9 Z" fill="#5a5a5a"/>
</svg>
<!-- right panel -->
<div class="abs" style="left:583px;top:72px;width:233px;height:12px;background:linear-gradient(#383638,#302e30)"></div>
<div class="abs" style="left:583px;top:84px;width:233px;height:157px;background:#2c2c2c"></div>
<svg class="abs" style="left:585px;top:73px" width="24" height="10" viewBox="585 73 24 10"><path d="M591.5,75.5 L589.3,78 L591.5,80.5 M600.3,75.5 L602.5,78 L600.3,80.5" fill="none" stroke="#5e5e5e" stroke-width="0.9"/></svg>
<div class="abs" style="left:608.3px;top:74px;width:21.5px;height:8.4px;background:#6a6a6a;border-radius:2px;font-size:6.5px;color:#f0f0f0;text-align:center;line-height:8.4px">Result</div>
<div class="abs" style="left:745px;top:74.5px;font-size:6.5px;color:#5ab0ec;white-space:nowrap">Best</div>
<div class="abs" style="left:765px;top:74.5px;font-size:6.5px;color:#b8b8b8;white-space:nowrap">Source</div>
<div class="abs" style="left:792px;top:74.5px;font-size:6.5px;color:#b8b8b8;white-space:nowrap">AEPrint</div>
<div class="abs" style="left:583px;top:157px;width:233px;text-align:center;font-size:10.5px;color:#d0d0d0">No Result</div>
<!-- variables -->
<div class="abs" style="left:583px;top:240.5px;width:233px;height:3px;background:#1c1b1c"></div>
<div class="abs" style="left:583px;top:243.5px;width:233px;height:16.5px;background:#231f23"></div>
<div class="abs" style="left:698px;top:241.5px;width:2px;height:2px;background:#555;border-radius:50%"></div>
<div class="abs" style="left:583px;top:259px;width:233px;height:1px;background:#2e2c2e"></div>
<div class="abs hdr" style="left:596.3px;top:248.5px">Variable</div>
<div class="abs hdr" style="left:673px;top:248.5px">Value</div>
<div class="abs" id="vrows" style="left:583px;top:260px;width:233px;height:197px;background:#1f1c1f"></div>
<div class="abs" style="left:583px;top:455px;width:233px;height:8.5px;background:#1b191b"></div><div class="abs" style="left:583px;top:459px;width:233px;height:1px;background:#252325"></div>
<div class="abs" style="left:698px;top:460px;width:2px;height:2px;background:#555;border-radius:50%"></div>
<div class="abs" style="left:583px;top:463px;width:233px;height:16px;background:#231f23"></div>
<div class="abs" style="left:583px;top:479px;width:233px;height:1px;background:#2e2c2e"></div>
<div class="abs hdr" style="left:596.3px;top:467.5px">Expression</div>
<div class="abs hdr" style="left:673px;top:467.5px">Value</div>
<div class="abs" id="erows" style="left:583px;top:480px;width:233px;height:68.5px;background:#1f1c1f"></div>
<div class="abs stripe" style="top:272.0px"></div>
<div class="abs stripe" style="top:291.2px"></div>
<div class="abs stripe" style="top:310.4px"></div>
<div class="abs stripe" style="top:329.6px"></div>
<div class="abs stripe" style="top:348.8px"></div>
<div class="abs stripe" style="top:368.0px"></div>
<div class="abs stripe" style="top:387.2px"></div>
<div class="abs stripe" style="top:406.4px"></div>
<div class="abs stripe" style="top:425.6px"></div>
<div class="abs stripe" style="top:444.8px"></div>
<div class="abs stripe" style="top:491.0px"></div>
<div class="abs stripe" style="top:510.2px"></div>
<div class="abs stripe" style="top:529.5px"></div>
<div class="abs" style="left:671px;top:260px;width:1px;height:195px;background:#2a272a"></div><div class="abs" style="left:671px;top:247px;width:1px;height:10px;background:#2a272a"></div>
<div class="abs" style="left:671px;top:480px;width:1px;height:68px;background:#2a272a"></div><div class="abs" style="left:671px;top:466px;width:1px;height:10px;background:#2a272a"></div>
<svg class="abs" style="left:589px;top:264.2px" width="6" height="6" viewBox="0 0 6 6"><path d="M1.8,0.8 L4,3 L1.8,5.2" fill="none" stroke="#bdbdbd" stroke-width="0.9"/></svg>
<div class="row" style="left:596.5px;top:263.7px">AppleScript</div>
<div class="row" style="left:673px;top:263.7px">«script AppleScript»</div>
<div class="abs" style="left:810.6px;top:262.5px;width:5.6px;height:9.5px;background:#4074f2;border-radius:2.8px;border:0.7px solid #182650"></div>
<svg class="abs" style="left:589px;top:273.8px" width="6" height="6" viewBox="0 0 6 6"><path d="M1.8,0.8 L4,3 L1.8,5.2" fill="none" stroke="#bdbdbd" stroke-width="0.9"/></svg>
<div class="row" style="left:596.5px;top:273.3px">parent</div>
<div class="row" style="left:673px;top:273.3px">«script AppleScript»</div>
<div class="abs" style="left:810.6px;top:272.1px;width:5.6px;height:9.5px;background:#4074f2;border-radius:2.8px;border:0.7px solid #182650"></div>
<svg class="abs" style="left:589px;top:283.4px" width="6" height="6" viewBox="0 0 6 6"><path d="M1.8,0.8 L4,3 L1.8,5.2" fill="none" stroke="#bdbdbd" stroke-width="0.9"/></svg>
<div class="row" style="left:596.5px;top:282.9px">required import items</div>
<div class="row" style="left:673px;top:282.9px">list of 3 items</div>
<div class="abs" style="left:810.6px;top:281.7px;width:5.6px;height:9.5px;background:#4074f2;border-radius:2.8px;border:0.7px solid #182650"></div>
<!-- bottom bar -->
<div class="abs" style="left:583px;top:548.5px;width:233px;height:12.5px;background:#282628;border-top:1px solid #302e30"></div>
<div class="abs" style="left:584px;top:551.5px;width:5px;height:6px;background:#4a4a4a;border-radius:1px"></div>
<div class="abs" style="left:674.5px;top:549px;width:16.7px;height:12px;background:#3a383a;border:1px solid #444"></div>
<div class="abs" style="left:691.2px;top:549px;width:14px;height:12px;background:#2c2a2c;border-right:1px solid #3a3a3a"></div>
<div class="abs" style="left:705.2px;top:549px;width:16.8px;height:12px;background:#302e30;border-right:1px solid #3a3a3a"></div>
<svg class="abs" style="left:674px;top:548px" width="50" height="14" viewBox="674 548 50 14">
<path d="M683,552 L683,558.5 M679.7,555.2 L686.3,555.2" stroke="#f0f0f0" stroke-width="1.3"/>
<path d="M696,555.2 L701.5,555.2" stroke="#6a6a6a" stroke-width="0.9"/>
<path d="M716.3,553.4 A2.8,2.8 0 1 1 713.5,552.4" fill="none" stroke="#6a6a6a" stroke-width="0.9"/>
</svg>
</body></html>
